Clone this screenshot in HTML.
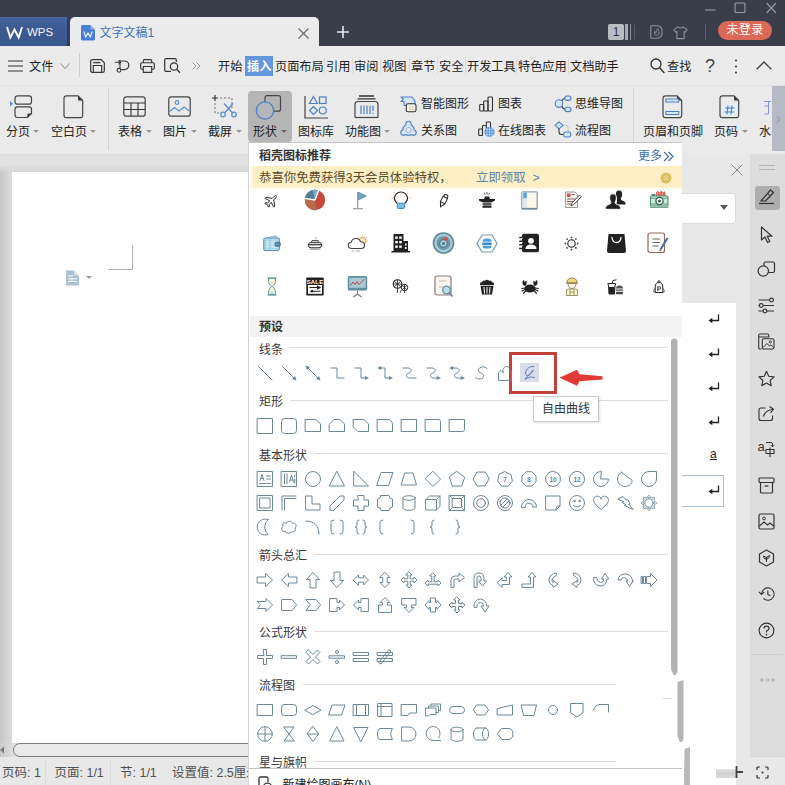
<!DOCTYPE html>
<html lang="zh-CN"><head><meta charset="utf-8"><title>WPS 文字文稿1</title>
<style>
*{box-sizing:border-box;margin:0;padding:0}
html,body{width:785px;height:785px;overflow:hidden;background:#dcdcdc;font-family:"Liberation Sans","Noto Sans CJK SC",sans-serif;font-size:13px;color:#222}
.abs{position:absolute}
svg{overflow:visible}
#root{position:relative;width:785px;height:785px;overflow:hidden;background:#dadada}
#titlebar{left:0;top:0;width:785px;height:46px;background:#3a3e4b}
#wpstab{left:0;top:17px;width:69px;height:29px;background:linear-gradient(180deg,#4566a0,#3c5a91 40%,#3b588e);border-right:2px solid #2f3b60;border-radius:0 0 4px 0;color:#fff}
#doctab{left:70px;top:17px;width:249px;height:31px;background:#ebebeb;border-radius:5px 5px 0 0}
#menubar{left:0;top:46px;width:785px;height:39px;background:#ebebeb}
#ribbon{left:0;top:85px;width:785px;height:69px;background:#eaeaea;border-top:1px solid #e0e0e0}
#work{left:0;top:154px;width:785px;height:631px;background:linear-gradient(180deg,#dddddd 0,#e3e3e3 3px,#e2e2e2 10px,#d6d6d6 18px,#d6d6d6 100%)}
#leftgrad{left:0;top:166px;width:12px;height:591px;background:linear-gradient(90deg,#c6c6c6,#dcdcdc);-webkit-mask-image:linear-gradient(180deg,transparent 0,#000 8px)}
#page{left:12px;top:172px;width:670px;height:571px;background:#fff}
#status{left:0;top:757px;width:785px;height:28px;background:#e8e8e8}
#panel{left:248px;top:142px;width:434px;height:643px;background:#fff;border-left:1px solid #d4d4d4;border-top:1px solid #c4c4c4}
#taskpane{left:682px;top:154px;width:67.500px;height:601.500px;background:#e8e8e8}
#side{left:749.500px;top:154px;width:35.500px;height:601.500px;background:#dddddd}
.t{position:absolute;white-space:nowrap;line-height:1}
.m{font-size:12.200px;color:#1f1f1f;top:60.500px}
.rl{font-size:12px;color:#222;top:126px}
.rs{font-size:12px;color:#222}
.sec{font-size:12px;color:#333;left:10px}
.hl{position:absolute;height:1px;background:#dcdcdc}
.st{font-size:12.500px;color:#505050;top:767px}
.tri{position:absolute;width:0;height:0;border-left:3px solid transparent;border-right:3px solid transparent;border-top:3.500px solid #9a9a9a;margin-top:-.5px}
</style></head><body>
<div id="root">
<!-- ======= title bar ======= -->
<div id="titlebar" class="abs"></div>
<div id="wpstab" class="abs">
  <svg class="abs" style="left:6px;top:9px" width="17" height="13" viewBox="0 0 17 13"><path d="M1 1 L4.3 11.5 L8.5 3.5 L12.7 11.5 L16 1" fill="none" stroke="#fff" stroke-width="1.9" stroke-linejoin="miter"/></svg>
  <span class="t" style="left:27px;top:10px;font-size:11.500px;color:#f4f6fa">WPS</span>
</div>
<div id="doctab" class="abs">
  <svg class="abs" style="left:11px;top:8px" width="14" height="15.500" viewBox="0 0 14 15.500"><path d="M1.500 0 H9.500 L14 4.500 V14 Q14 15.500 12.500 15.500 H1.500 Q0 15.500 0 14 V1.500 Q0 0 1.500 0Z" fill="#4a80d4"/><path d="M9.500 0 L14 4.500 H10.500 Q9.500 4.500 9.500 3.500Z" fill="#8fb4ec"/><path d="M2.800 6.500 L4.800 12 L7 8 L9.200 12 L11.200 6.500" fill="none" stroke="#eef4ff" stroke-width="1.100"/></svg>
  <span class="t" style="left:29.500px;top:9.500px;font-size:12px;color:#3c74b9">文字文稿1</span>
  <svg class="abs" style="left:228px;top:10.500px" width="11" height="11" viewBox="0 0 11 11"><path d="M0.5 .5 L10.5 10.5 M10.5 .5 L.5 10.5" stroke="#666" stroke-width="1.1"/></svg>
</div>
<svg class="abs" style="left:336px;top:25px" width="14" height="14" viewBox="0 0 14 14"><path d="M7 1 V13 M1 7 H13" stroke="#e8e8e8" stroke-width="1.6"/></svg>
<!-- window controls -->
<svg class="abs" style="left:700px;top:0" width="85" height="16" viewBox="0 0 85 16"><path d="M5 10 H15.500" stroke="#9a9ca5" stroke-width="1.100"/><rect x="35" y="3" width="10" height="9.500" rx="1" fill="none" stroke="#9a9ca5" stroke-width="1.100"/><path d="M66.500 3 L76 13 M76 3 L66.500 13" stroke="#9a9ca5" stroke-width="1.100"/></svg>
<div class="abs" style="left:608px;top:24px;width:16px;height:16px;background:#b9bbc2;border-radius:2px;color:#33363f;font-size:12px;line-height:16px;text-align:center">1</div>
<div class="abs" style="left:625px;top:24px;width:3px;height:16px;background:#a5a8b0"></div>
<div class="abs" style="left:630px;top:24px;width:1px;height:16px;background:#8a8d96"></div><div class="abs" style="left:634px;top:25px;width:1px;height:14px;background:#565a66"></div>
<svg class="abs" style="left:650px;top:25px" width="13" height="14" viewBox="0 0 13 14"><path d="M1.500 .8 H7 Q12.200 .8 12.200 7 Q12.200 13.200 7 13.200 H1.500 Q.8 13.200 .8 12.500 V1.500 Q.8 .8 1.500 .8Z" fill="none" stroke="#8f939d" stroke-width="1.100"/><path d="M6.500 11 Q3.500 9.500 4.500 6.500 Q5.500 7 5.800 8 Q6 5 8 3.500 Q8 5.500 9 6.500 Q10 9.500 6.500 11Z" fill="none" stroke="#8f939d" stroke-width=".9"/></svg>
<svg class="abs" style="left:673px;top:25.500px" width="15" height="13.500" viewBox="0 0 16 15"><path d="M5 1 Q8 3.5 11 1 L15.3 4 L13.3 7 L12 6.2 V14 H4 V6.2 L2.7 7 L.7 4 Z" fill="none" stroke="#8f939d" stroke-width="1.2" stroke-linejoin="round"/></svg>
<div class="abs" style="left:705px;top:24px;width:1px;height:16px;background:#5d616c"></div>
<div class="abs" style="left:718px;top:21px;width:54px;height:19px;border-radius:10px;background:#dc6858;color:#fff;font-size:12px;line-height:18px;text-align:center;letter-spacing:.3px">未登录</div>

<!-- ======= menu bar ======= -->
<div id="menubar" class="abs"></div>
<svg class="abs" style="left:8px;top:60px" width="15" height="12" viewBox="0 0 15 12"><path d="M0 1 H15 M0 6 H15 M0 11 H15" stroke="#333" stroke-width="1.2"/></svg>
<span class="t m" style="left:29px">文件</span>
<svg class="abs" style="left:60px;top:63px" width="10" height="7" viewBox="0 0 10 7"><path d="M.5 .5 L5 5.5 L9.500 .5" fill="none" stroke="#999" stroke-width="1.1"/></svg>
<div class="abs" style="left:79px;top:53px;width:1px;height:24px;background:#cfcfcf"></div>
<!-- quick icons -->
<svg class="abs" style="left:89.500px;top:58.500px" width="15" height="14" viewBox="0 0 16 15"><path d="M2.500 .7 H12 L15.300 4 V12.500 Q15.300 14.300 13.500 14.300 H2.500 Q.7 14.300 .7 12.500 V2.500 Q.7 .7 2.500 .7Z M3.500 14 V7 H12.500 V14 M3.500 3.800 H11" fill="none" stroke="#363636" stroke-width="1.250"/></svg>
<svg class="abs" style="left:114px;top:58px" width="16" height="16" viewBox="0 0 16 16"><path d="M.8 4.300 H6.500 M4.500 2.300 L6.700 4.300 L4.500 6.300" fill="none" stroke="#363636" stroke-width="1.100"/><path d="M6 2 V10.500" stroke="#363636" stroke-width="1.100"/><path d="M7 3 H10.500 A4.300 4.300 0 0 1 10.500 11.600 H7.200" fill="none" stroke="#363636" stroke-width="1.200"/><circle cx="5" cy="12.300" r="1.900" fill="#ebebeb" stroke="#363636" stroke-width="1.100"/></svg>
<svg class="abs" style="left:139.500px;top:58.500px" width="15" height="14" viewBox="0 0 16 15"><path d="M3.500 4 V2 Q3.500 .7 4.800 .7 H11.200 Q12.500 .7 12.500 2 V4 M3.500 11 H2 Q.7 11 .7 9.700 V5.300 Q.7 4 2 4 H14 Q15.300 4 15.300 5.300 V9.700 Q15.300 11 14 11 H12.500 M3.500 8 H12.500 V14.300 H3.500 Z" fill="none" stroke="#363636" stroke-width="1.250"/></svg>
<svg class="abs" style="left:164px;top:58px" width="17" height="16" viewBox="0 0 17 16"><path d="M7 13.300 H2 Q.7 13.300 .7 12 V2 Q.7 .7 2 .7 H11 Q12.300 .7 12.300 2 V4" fill="none" stroke="#333" stroke-width="1.200"/><circle cx="10" cy="8.500" r="3.700" fill="none" stroke="#333" stroke-width="1.200"/><path d="M12.700 11.200 L16 14.800" stroke="#333" stroke-width="1.300"/></svg>
<svg class="abs" style="left:192px;top:62px" width="9" height="8" viewBox="0 0 9 8"><path d="M.5 .5 L4 4 L.5 7.500 M4.500 .5 L8 4 L4.500 7.500" fill="none" stroke="#999" stroke-width="1"/></svg>
<!-- tabs -->
<span class="t m" style="left:218px">开始</span>
<div class="abs" style="left:245px;top:55.500px;width:28px;height:20.500px;background:#6496de"></div>
<span class="t m" style="left:247px;color:#fff;font-weight:bold">插入</span>
<span class="t m" style="left:275px">页面布局</span>
<span class="t m" style="left:326px">引用</span>
<span class="t m" style="left:354px">审阅</span>
<span class="t m" style="left:382px">视图</span>
<span class="t m" style="left:411px">章节</span>
<span class="t m" style="left:439px">安全</span>
<span class="t m" style="left:467px">开发工具</span>
<span class="t m" style="left:518px">特色应用</span>
<span class="t m" style="left:570px">文档助手</span>
<div class="abs" style="left:324px;top:58px;width:1px;height:16px;background:#dadada"></div>
<div class="abs" style="left:352px;top:58px;width:1px;height:16px;background:#dadada"></div>
<div class="abs" style="left:380px;top:58px;width:1px;height:16px;background:#dadada"></div>
<div class="abs" style="left:409px;top:58px;width:1px;height:16px;background:#dadada"></div>
<div class="abs" style="left:437px;top:58px;width:1px;height:16px;background:#dadada"></div>
<div class="abs" style="left:465px;top:58px;width:1px;height:16px;background:#dadada"></div>
<div class="abs" style="left:516px;top:58px;width:1px;height:16px;background:#dadada"></div>
<div class="abs" style="left:568px;top:58px;width:1px;height:16px;background:#dadada"></div>
<svg class="abs" style="left:650px;top:58px" width="15" height="16" viewBox="0 0 15 16"><circle cx="6" cy="6" r="5" fill="none" stroke="#333" stroke-width="1.300"/><path d="M9.700 9.700 L14.300 15" stroke="#333" stroke-width="1.400"/></svg>
<span class="t m" style="left:667px">查找</span>
<span class="t" style="left:705px;top:57px;font-size:18px;color:#444">?</span>
<svg class="abs" style="left:734px;top:59px" width="4" height="15" viewBox="0 0 4 15"><circle cx="2" cy="1.500" r="1.100" fill="#444"/><circle cx="2" cy="7.500" r="1.100" fill="#444"/><circle cx="2" cy="13.500" r="1.100" fill="#444"/></svg>
<svg class="abs" style="left:756px;top:61px" width="16" height="9" viewBox="0 0 16 9"><path d="M.7 8.300 L8 1 L15.300 8.300" fill="none" stroke="#444" stroke-width="1.300"/></svg>

<!-- ======= ribbon ======= -->
<div id="ribbon" class="abs"></div>
<!-- highlighted 形状 button -->
<div class="abs" style="left:248px;top:91px;width:44px;height:51px;background:#b5b5b5;border-radius:4px"></div>
<!-- 分页 -->
<svg class="abs" style="left:9px;top:95px" width="24" height="24" viewBox="0 0 24 24"><path d="M1 6 L4 8.800 L1 11.600Z" fill="#5b8fd8"/><rect x="6" y=".8" width="16.500" height="8.400" rx="2.500" fill="none" stroke="#454545" stroke-width="1.200"/><path d="M8.500 11.800 H20 Q22.500 11.800 22.500 14.300 V18.500 L18.500 22.500 H8.500 Q6 22.500 6 20 V14.300 Q6 11.800 8.500 11.800Z" fill="none" stroke="#454545" stroke-width="1.200"/><path d="M22.500 18.500 L18.500 22.500 V19.500 Q18.500 18.500 19.500 18.500Z" fill="#333"/></svg>
<span class="t rl" style="left:6px">分页</span><i class="tri" style="left:33px;top:130px"></i>
<!-- 空白页 -->
<svg class="abs" style="left:63px;top:95px" width="21" height="24" viewBox="0 0 21 24"><path d="M3.500 .8 H15 L19.700 5.500 V20.200 Q19.700 22.700 17.200 22.700 H3.500 Q1 22.700 1 20.200 V3.300 Q1 .8 3.500 .8Z" fill="none" stroke="#454545" stroke-width="1.200"/><path d="M15 .8 L19.700 5.500 H16 Q15 5.500 15 4.500Z" fill="#333"/></svg>
<span class="t rl" style="left:51px">空白页</span><i class="tri" style="left:90px;top:130px"></i>
<div class="abs" style="left:108px;top:88px;width:1px;height:62px;background:#d4d4d4"></div>
<!-- 表格 -->
<svg class="abs" style="left:123px;top:96px" width="23" height="21" viewBox="0 0 23 21"><rect x=".8" y=".8" width="21.400" height="19.400" rx="2.500" fill="none" stroke="#454545" stroke-width="1.200"/><path d="M.8 7 H22.200 M.8 13.500 H22.200 M8 7 V20 M15 7 V20" stroke="#333" stroke-width="1.100"/></svg>
<span class="t rl" style="left:118px">表格</span><i class="tri" style="left:146px;top:130px"></i>
<!-- 图片 -->
<svg class="abs" style="left:168px;top:96px" width="23" height="21" viewBox="0 0 23 21"><rect x=".8" y=".8" width="21.400" height="19.400" rx="2.500" fill="none" stroke="#454545" stroke-width="1.200"/><circle cx="9" cy="6.500" r="1.800" fill="none" stroke="#5b8fd8" stroke-width="1.200"/><path d="M1.500 15.500 L6.500 11.500 L11 15 L16 11 L21.500 15" fill="none" stroke="#5b8fd8" stroke-width="1.200"/></svg>
<span class="t rl" style="left:163px">图片</span><i class="tri" style="left:191px;top:130px"></i>
<!-- 截屏 -->
<svg class="abs" style="left:211px;top:94px" width="26" height="25" viewBox="0 0 26 25"><path d="M1 4 H7 M4 1 V7" stroke="#333" stroke-width="1.200"/><path d="M9 4 H21 V14 M4 9 V19 H8" fill="none" stroke="#777" stroke-width="1" stroke-dasharray="2.200 1.800"/><path d="M13 9.500 L21.500 19 M22 9.500 L13.500 19" stroke="#5b8fd8" stroke-width="1.300"/><circle cx="12" cy="20.500" r="2.300" fill="none" stroke="#5b8fd8" stroke-width="1.300"/><circle cx="23" cy="20.500" r="2.300" fill="none" stroke="#5b8fd8" stroke-width="1.300"/></svg>
<span class="t rl" style="left:208px">截屏</span><i class="tri" style="left:236px;top:130px"></i>
<!-- 形状 -->
<svg class="abs" style="left:255px;top:94px" width="27" height="27" viewBox="0 0 27 27"><rect x="10" y="1.700" width="15.500" height="15.500" rx="2" fill="none" stroke="#454545" stroke-width="1.200"/><circle cx="10" cy="16.500" r="8.700" fill="#b3b7bd" stroke="#4d7fc4" stroke-width="1.300"/></svg>
<span class="t rl" style="left:253px">形状</span><i class="tri" style="left:281px;top:130px;border-top-color:#666"></i>
<!-- 图标库 -->
<svg class="abs" style="left:304px;top:94px" width="25" height="26" viewBox="0 0 25 26"><path d="M1 2 V24 H24" fill="none" stroke="#454545" stroke-width="1.200"/><path d="M9.500 2.500 L13.500 9.500 H5.500Z" fill="none" stroke="#4d7fc4" stroke-width="1.200"/><rect x="15.500" y="3" width="6.500" height="6.500" fill="none" stroke="#4d7fc4" stroke-width="1.200"/><path d="M9.500 12.500 L13.500 16.500 L9.500 20.500 L5.500 16.500Z" fill="none" stroke="#4d7fc4" stroke-width="1.200"/><circle cx="18.800" cy="16.500" r="3.500" fill="none" stroke="#4d7fc4" stroke-width="1.200"/></svg>
<span class="t rl" style="left:298px">图标库</span>
<!-- 功能图 -->
<svg class="abs" style="left:354px;top:95px" width="25" height="24" viewBox="0 0 25 24"><path d="M5 1 H20 M3.500 3.800 H21.500" stroke="#333" stroke-width="1.300"/><path d="M1 22.500 V9.500 Q1 6.500 4 6.500 H21 Q24 6.500 24 9.500 V22.500" fill="none" stroke="#454545" stroke-width="1.200"/><path d="M1 22.500 H24" stroke="#454545" stroke-width="1.200"/><path d="M7 10.500 V19 M10 10.500 V19 M13 10.500 V19 M16 10.500 V19" stroke="#4d7fc4" stroke-width="1.200"/><path d="M19 10.500 V16 M19 17.800 V19" stroke="#4d7fc4" stroke-width="1.200"/></svg>
<span class="t rl" style="left:345px">功能图</span><i class="tri" style="left:384px;top:130px"></i>
<!-- small items col 1 -->
<svg class="abs" style="left:400px;top:95.500px" width="17" height="17" viewBox="0 0 17 17"><path d="M1 1 H12 L15 5 V9.500 H4 V5.500 L1 5.500 L3.300 3.200Z" fill="#d3e4f6" stroke="#4d7fc4" stroke-width="1.100" stroke-linejoin="round"/><rect x="6.300" y="7.800" width="9.700" height="8" rx="1.800" fill="#f4f4f4" stroke="#333" stroke-width="1.100"/><path d="M9 11 H10.500 M11.800 11 H13.500 M9 13.300 H10.500 M11.800 13.300 H13.500" stroke="#d9a050" stroke-width=".9"/></svg>
<span class="t rs" style="left:421px;top:98px">智能图形</span>
<svg class="abs" style="left:400px;top:121px" width="17" height="16" viewBox="0 0 17 16"><path d="M5.800 3.800 A2.800 2.800 0 1 1 11.200 3.800 A6.500 6.500 0 0 1 14.200 8.800 A2.800 2.800 0 1 1 11.500 13.500 A6.500 6.500 0 0 1 5.500 13.500 A2.800 2.800 0 1 1 2.800 8.800 A6.500 6.500 0 0 1 5.800 3.800Z" fill="#d8e6f5" stroke="#5186c6" stroke-width="1.200" stroke-linejoin="round"/><circle cx="8.500" cy="9" r="2.600" fill="#e6ecf3" stroke="#8fb0da" stroke-width=".9"/></svg>
<span class="t rs" style="left:421px;top:125px">关系图</span>
<!-- col 2 -->
<svg class="abs" style="left:478.500px;top:95.500px" width="15" height="16" viewBox="0 0 15 16"><rect x=".7" y="8.500" width="4" height="6.500" rx=".8" fill="none" stroke="#333" stroke-width="1.100"/><rect x="4.700" y="5" width="4.300" height="10" rx=".8" fill="none" stroke="#333" stroke-width="1.100"/><rect x="9" y="1" width="4.500" height="14" rx=".8" fill="none" stroke="#333" stroke-width="1.100"/></svg>
<span class="t rs" style="left:498px;top:98px">图表</span>
<svg class="abs" style="left:478px;top:121px" width="17" height="17" viewBox="0 0 17 17"><rect x=".7" y="8" width="3.800" height="6.500" rx=".8" fill="none" stroke="#333" stroke-width="1.100"/><path d="M4.500 14.500 V5.300 Q4.500 4.500 5.300 4.500 H8.300 M8.300 14 V1.800 Q8.300 1 9.100 1 H11.700 Q12.500 1 12.500 1.800 V6" fill="none" stroke="#333" stroke-width="1.100"/><circle cx="11.500" cy="11" r="5" fill="#3f86d8"/><path d="M6.500 11 H16.500 M11.500 6 V16 M7.500 8.300 H15.500 M7.500 13.700 H15.500 M9 6.800 V15.200 M14 6.800 V15.200" stroke="#cfe2f8" stroke-width=".7" fill="none"/></svg>
<span class="t rs" style="left:498px;top:125px">在线图表</span>
<!-- col 3 -->
<svg class="abs" style="left:554px;top:95px" width="18" height="18" viewBox="0 0 18 18"><path d="M7.500 6.500 Q9 3.200 11 3.200 M7.500 10.500 Q9 14.300 11 14.300" stroke="#333" stroke-width="1.100" fill="none"/><circle cx="5" cy="8.600" r="3.800" fill="#d3e4f6" stroke="#4d7fc4" stroke-width="1.100"/><rect x="10.800" y="1" width="6.200" height="4.400" rx="2.200" fill="#d3e4f6" stroke="#4d7fc4" stroke-width="1.100"/><rect x="10.800" y="12.200" width="6.200" height="4.400" rx="2.200" fill="#d3e4f6" stroke="#4d7fc4" stroke-width="1.100"/></svg>
<span class="t rs" style="left:575px;top:98px">思维导图</span>
<svg class="abs" style="left:554px;top:121px" width="18" height="17" viewBox="0 0 18 17"><path d="M5 .8 L9 4.300 L5 7.800 L1 4.300Z" fill="#d3e4f6" stroke="#4d7fc4" stroke-width="1.100" stroke-linejoin="round"/><path d="M5 7.800 V11 Q5 13.500 7.500 13.500 H9.500" fill="none" stroke="#333" stroke-width="1.100"/><path d="M9.500 4.300 H12 Q14 4.300 14 6.300 V10" fill="none" stroke="#999" stroke-width=".9" stroke-dasharray="1.300 1.300"/><rect x="9.700" y="11" width="7" height="5" rx="1.800" fill="#d3e4f6" stroke="#4d7fc4" stroke-width="1.100"/></svg>
<span class="t rs" style="left:575px;top:125px">流程图</span>
<div class="abs" style="left:633px;top:88px;width:1px;height:62px;background:#d4d4d4"></div>
<!-- 页眉和页脚 -->
<svg class="abs" style="left:662px;top:95px" width="21" height="24" viewBox="0 0 21 24"><path d="M3.500 .8 H15 L19.700 5.500 V20.200 Q19.700 22.700 17.200 22.700 H3.500 Q1 22.700 1 20.200 V3.300 Q1 .8 3.500 .8Z" fill="none" stroke="#454545" stroke-width="1.200"/><path d="M15 .8 L19.700 5.500 H16 Q15 5.500 15 4.500Z" fill="#333"/><rect x="3.800" y="4" width="13" height="3" fill="#dbe6f6" stroke="#4d7fc4" stroke-width="1"/><rect x="3.800" y="16.500" width="13" height="3" fill="#dbe6f6" stroke="#4d7fc4" stroke-width="1"/></svg>
<span class="t rl" style="left:643px">页眉和页脚</span>
<!-- 页码 -->
<svg class="abs" style="left:718.500px;top:95px" width="21" height="24" viewBox="0 0 21 24"><path d="M3.500 .8 H15 L19.700 5.500 V20.200 Q19.700 22.700 17.200 22.700 H3.500 Q1 22.700 1 20.200 V3.300 Q1 .8 3.500 .8Z" fill="none" stroke="#454545" stroke-width="1.200"/><path d="M15 .8 L19.700 5.500 H16 Q15 5.500 15 4.500Z" fill="#333"/><rect x="3" y="9" width="15" height="11.500" fill="#e3eefb"/><path d="M6 13 H15.500 M5.500 17 H15 M9 10.500 L8 19.500 M13 10.500 L12 19.500" stroke="#4d7fc4" stroke-width="1.100"/></svg>
<span class="t rl" style="left:714px">页码</span><i class="tri" style="left:742px;top:130px"></i>
<!-- 水印 (cut) -->
<svg class="abs" style="left:763px;top:100px" width="9" height="16" viewBox="0 0 9 16"><path d="M1 1.500 H8 M5.500 1.500 V6 H1.500 M5.500 6 V14 H1.500" fill="none" stroke="#8196d6" stroke-width="1"/></svg>
<span class="t rl" style="left:759px">水印</span>
<!-- ribbon scroller -->
<div class="abs" style="left:772px;top:86px;width:13px;height:65px;background:#b6bac5"></div>
<svg class="abs" style="left:776px;top:115.500px" width="5" height="7" viewBox="0 0 5 7"><path d="M.8 .5 L4 3.500 L.8 6.500" fill="none" stroke="#8d919c" stroke-width="1"/></svg>


<!-- ======= work area ======= -->
<div id="work" class="abs"></div>
<div id="leftgrad" class="abs"></div>
<div id="page" class="abs"></div>
<!-- page corner mark -->
<div class="abs" style="left:132px;top:245px;width:1px;height:25px;background:#b0b0b0"></div>
<div class="abs" style="left:108px;top:269px;width:25px;height:1px;background:#b0b0b0"></div>
<svg class="abs" style="left:65px;top:270px" width="15" height="16" viewBox="0 0 15 16"><path d="M1 .5 H9 L14 5.500 V15.500 H1Z" fill="#a9c1d3"/><path d="M9 .5 L14 5.500 H9Z" fill="#d5e2ec"/><path d="M3 6 H8 M3 8.800 H12 M3 11.500 H12 M7 8.800 V11.500" stroke="#fff" stroke-width="1"/></svg>
<i class="tri" style="left:86px;top:276px;border-top-color:#999"></i>
<!-- horizontal scrollbar -->
<div class="abs" style="left:0;top:743px;width:250px;height:14px;background:linear-gradient(90deg,#cbcbcb 0,#dcdcdc 12px)"></div>
<svg class="abs" style="left:0;top:746px" width="4" height="8" viewBox="0 0 4 8"><path d="M4 .5 V7.500 L0 4Z" fill="#7a7a7a"/></svg>
<div class="abs" style="left:13px;top:743px;width:260px;height:14px;background:#e9e9e9;border:1px solid #7c7c7c;border-radius:7px"></div>

<div id="status" class="abs"></div>
<span class="t st" style="left:2px">页码: 1</span>
<div class="abs" style="left:45px;top:760px;width:1px;height:25px;background:#dadada"></div>
<span class="t st" style="left:54.500px">页面: 1/1</span>
<div class="abs" style="left:110px;top:760px;width:1px;height:25px;background:#dadada"></div>
<span class="t st" style="left:120px">节: 1/1</span>
<span class="t st" style="left:172px">设置值: 2.5厘米</span>


<svg class="abs" style="left:756px;top:766px" width="13" height="13" viewBox="0 0 13 13"><path d="M1 4 V2 Q1 1 2 1 H4 M9 1 H11 Q12 1 12 2 V4 M12 9 V11 Q12 12 11 12 H9 M4 12 H2 Q1 12 1 11 V9" fill="none" stroke="#333" stroke-width="1.200"/><circle cx="6.500" cy="6.500" r="1" fill="#333"/></svg>

<div id="taskpane" class="abs"></div>
<div id="side" class="abs"></div>
<!-- task pane -->
<svg class="abs" style="left:731px;top:164px" width="12" height="12" viewBox="0 0 12 12"><path d="M.5 .5 L11.500 11.500 M11.500 .5 L.5 11.500" stroke="#888" stroke-width="1"/></svg>
<div class="abs" style="left:682px;top:193px;width:54px;height:31px;background:#fff;border:1px solid #dcdcdc;border-left:none;border-radius:0 3px 3px 0"></div>
<i class="tri" style="left:720px;top:205px;border-left-width:4px;border-right-width:4px;border-top:5px solid #555"></i>
<div class="abs" style="left:682px;top:303px;width:54px;height:482px;background:#fff"></div>
<div class="abs" style="left:736px;top:755px;width:14px;height:30px;background:#e8e8e8"></div>
<div class="abs" style="left:682px;top:475px;width:42px;height:32px;border:1px solid #a9c3d6;border-left:none"></div>
<!-- paragraph marks -->
<svg class="abs" style="left:708px;top:313.5px" width="12" height="11" viewBox="0 0 12 11"><path d="M10.500 .5 V6.500 H2.500" fill="none" stroke="#222" stroke-width="1.300"/><path d="M.5 6.500 L4.300 3.700 V9.300Z" fill="#222"/></svg>
<svg class="abs" style="left:708px;top:347.5px" width="12" height="11" viewBox="0 0 12 11"><path d="M10.500 .5 V6.500 H2.500" fill="none" stroke="#222" stroke-width="1.300"/><path d="M.5 6.500 L4.300 3.700 V9.300Z" fill="#222"/></svg>
<svg class="abs" style="left:708px;top:381.5px" width="12" height="11" viewBox="0 0 12 11"><path d="M10.500 .5 V6.500 H2.500" fill="none" stroke="#222" stroke-width="1.300"/><path d="M.5 6.500 L4.300 3.700 V9.300Z" fill="#222"/></svg>
<svg class="abs" style="left:708px;top:415.5px" width="12" height="11" viewBox="0 0 12 11"><path d="M10.500 .5 V6.500 H2.500" fill="none" stroke="#222" stroke-width="1.300"/><path d="M.5 6.500 L4.300 3.700 V9.300Z" fill="#222"/></svg>
<span class="t" style="left:710px;top:448px;font-size:12px;color:#222;text-decoration:underline">a</span>
<svg class="abs" style="left:708px;top:484.5px" width="12" height="11" viewBox="0 0 12 11"><path d="M10.500 .5 V6.500 H2.500" fill="none" stroke="#222" stroke-width="1.300"/><path d="M.5 6.500 L4.300 3.700 V9.300Z" fill="#222"/></svg>
<!-- sidebar -->
<div class="abs" style="left:759px;top:164.500px;width:16px;height:1px;background:#b4b4b4"></div>
<div class="abs" style="left:759px;top:168.500px;width:16px;height:1px;background:#b4b4b4"></div>
<div class="abs" style="left:755px;top:186px;width:24.500px;height:24px;background:#aeaeae;border-radius:3px"></div>

<svg class="abs" style="left:757px;top:187px" width="20" height="19" viewBox="0 0 20 19"><path d="M2 16.500 H17" stroke="#333" stroke-width="1.200"/><path d="M4 14 L13.500 3 L16.500 5.500 L8.500 14Z" fill="none" stroke="#333" stroke-width="1.200" stroke-linejoin="round"/><path d="M10.500 6.500 L13.500 9" stroke="#333" stroke-width="1"/></svg>
<svg class="abs" style="left:760px;top:226px" width="14" height="18" viewBox="0 0 14 18"><path d="M1.500 1 V14 L5 11 L7.500 16.500 L9.800 15.500 L7.300 10.200 H12Z" fill="none" stroke="#333" stroke-width="1.200" stroke-linejoin="round"/></svg>
<svg class="abs" style="left:757px;top:261px" width="19" height="18" viewBox="0 0 19 18"><rect x="7" y="1" width="10.500" height="10.500" rx="1.500" fill="none" stroke="#333" stroke-width="1.200"/><circle cx="6.300" cy="10" r="5.200" fill="#dedede" stroke="#333" stroke-width="1.200"/></svg>
<svg class="abs" style="left:758px;top:297px" width="17" height="17" viewBox="0 0 17 17"><path d="M.5 3 H16 M.5 8.500 H16 M.5 14 H16" stroke="#333" stroke-width="1.100"/><circle cx="13.500" cy="3" r="1.900" fill="#dddddd" stroke="#333" stroke-width="1.100"/><circle cx="3.200" cy="8.500" r="1.900" fill="#dddddd" stroke="#333" stroke-width="1.100"/><circle cx="7" cy="14" r="1.900" fill="#dddddd" stroke="#333" stroke-width="1.100"/></svg>
<svg class="abs" style="left:758px;top:333px" width="17" height="17" viewBox="0 0 17 17"><path d="M3.500 16 H2 Q.7 16 .7 14.700 V2.300 Q.7 1 2 1 H9.500 Q10.800 1 10.800 2.300 V4.500 M.7 4 H10.800" fill="none" stroke="#333" stroke-width="1.100"/><rect x="4.300" y="5.800" width="11.700" height="10.200" rx="1.500" fill="none" stroke="#333" stroke-width="1.100"/><circle cx="12.300" cy="9" r="1.100" fill="none" stroke="#333" stroke-width=".9"/><path d="M5 14.500 L9 10.500 L11.500 13 L13 11.800 L15.500 14.300" fill="none" stroke="#333" stroke-width="1"/></svg>
<svg class="abs" style="left:758px;top:369.500px" width="17" height="17" viewBox="0 0 19 19"><path d="M9.500 1.500 L12 7 L18 7.700 L13.500 11.700 L14.800 17.500 L9.500 14.500 L4.200 17.500 L5.500 11.700 L1 7.700 L7 7Z" fill="none" stroke="#333" stroke-width="1.300" stroke-linejoin="round"/></svg>
<svg class="abs" style="left:758px;top:405px" width="17" height="17" viewBox="0 0 17 17"><path d="M7.500 3 H3 Q1 3 1 5 V13.500 Q1 15.500 3 15.500 H12.500 Q14.500 15.500 14.500 13.500 V10.500" fill="none" stroke="#333" stroke-width="1.100"/><path d="M5.500 11.500 Q7 5.500 15 4.300 M11.500 1.500 L15.500 4.200 L12.500 7.800" fill="none" stroke="#333" stroke-width="1.100" stroke-linejoin="round"/></svg>
<svg class="abs" style="left:756px;top:439px" width="21" height="20" viewBox="0 0 21 20"><text x="1.500" y="12" font-family="Liberation Sans,sans-serif" font-size="13" fill="#333">a</text><path d="M10 3.500 H15 Q16.500 3.500 16.500 5 V7.500 M14.500 5.800 L16.500 7.800 L18.500 5.800" fill="none" stroke="#333" stroke-width="1"/><path d="M10 10.500 H18 V14.500 H10Z M14 8.500 V18" fill="none" stroke="#333" stroke-width="1.100"/></svg>
<svg class="abs" style="left:758px;top:477px" width="17" height="17" viewBox="0 0 17 17"><rect x="1" y="1" width="15" height="4.500" rx="1" fill="none" stroke="#333" stroke-width="1.200"/><path d="M2.500 5.500 V15 Q2.500 16 3.500 16 H13.500 Q14.500 16 14.500 15 V5.500" fill="none" stroke="#333" stroke-width="1.200"/><path d="M6.500 9 H10.500" stroke="#333" stroke-width="1.200"/></svg>
<svg class="abs" style="left:758px;top:513px" width="17" height="17" viewBox="0 0 17 17"><rect x="1" y="1" width="15" height="15" rx="1.500" fill="none" stroke="#333" stroke-width="1.200"/><circle cx="6" cy="5.500" r="1.400" fill="none" stroke="#333" stroke-width="1"/><path d="M1.500 13 L6 9 L9.500 12 L12 10 L15.500 13" fill="none" stroke="#333" stroke-width="1.100"/></svg>
<svg class="abs" style="left:758px;top:549px" width="17" height="18" viewBox="0 0 17 18"><path d="M8.500 1 L15.500 5 V13 L8.500 17 L1.500 13 V5Z" fill="none" stroke="#333" stroke-width="1.200" stroke-linejoin="round"/><path d="M8.500 13 V8 M8.500 10.500 Q5.500 10 5.500 7 Q8.500 7.500 8.500 10.500 Q11.500 9.500 11.500 6.500 Q8.500 7 8.500 10" fill="none" stroke="#333" stroke-width="1"/></svg>
<svg class="abs" style="left:757.500px;top:586px" width="17" height="16" viewBox="0 0 19 18"><path d="M4 9 A7 7 0 1 1 6 14" fill="none" stroke="#333" stroke-width="1.200"/><path d="M1 6.500 L4 9.500 L7 6.500" fill="none" stroke="#333" stroke-width="1.200"/><path d="M11 5 V9.500 L14 11" fill="none" stroke="#333" stroke-width="1.200"/></svg>
<svg class="abs" style="left:757.500px;top:621.500px" width="17" height="17" viewBox="0 0 18 18"><circle cx="9" cy="9" r="7.800" fill="none" stroke="#333" stroke-width="1.200"/><path d="M6.300 7 Q6.300 4.300 9 4.300 Q11.700 4.300 11.700 6.800 Q11.700 8.300 9 9.500 V11" fill="none" stroke="#333" stroke-width="1.200"/><circle cx="9" cy="13.300" r=".9" fill="#333"/></svg>
<div class="abs" style="left:752px;top:654px;width:31px;height:1px;background:#cfcfcf"></div>
<svg class="abs" style="left:760px;top:678px" width="15" height="4" viewBox="0 0 15 4"><circle cx="2" cy="2" r="1.300" fill="#e6e6e6" stroke="#8c8c8c" stroke-width=".7"/><circle cx="7.500" cy="2" r="1.300" fill="#e6e6e6" stroke="#8c8c8c" stroke-width=".7"/><circle cx="13" cy="2" r="1.300" fill="#e6e6e6" stroke="#8c8c8c" stroke-width=".7"/></svg>

<div class="abs" style="left:716px;top:769px;width:21px;height:8.500px;background:linear-gradient(180deg,#e3e3e3,#cfcfcf 50%,#dcdcdc)"></div>
<svg class="abs" style="left:733px;top:765px" width="11" height="14" viewBox="0 0 11 14"><path d="M3.500 1 V13 M2.500 7 H10" stroke="#444" stroke-width="1.800"/></svg>

<!-- ======= dropdown panel ======= -->
<div id="panel" class="abs"></div>

<span class="t" style="left:259px;top:149.500px;font-size:12px;font-weight:bold;color:#333">稻壳图标推荐</span>
<span class="t" style="left:638px;top:149.500px;font-size:12px;color:#3b6ea8">更多</span>
<svg class="abs" style="left:663px;top:150.500px" width="11" height="11" viewBox="0 0 11 11"><path d="M1 1 L5.500 5.500 L1 10 M5.500 1 L10 5.500 L5.500 10" fill="none" stroke="#3b6ea8" stroke-width="1.100"/></svg>
<div class="abs" style="left:249px;top:165.500px;width:433px;height:21.500px;background:linear-gradient(90deg,#fff 0,#fdefc3 6px)"></div>
<div class="abs" style="left:249px;top:187px;width:433px;height:3px;background:linear-gradient(180deg,#fdf3d4,#fff)"></div>
<span class="t" style="left:259px;top:172px;font-size:12.400px;color:#5b4a2b">恭喜你免费获得3天会员体验特权，</span>
<span class="t" style="left:476px;top:172px;font-size:12.400px;color:#5d82a8">立即领取&nbsp; &gt;</span>
<svg class="abs" style="left:660px;top:172px" width="12" height="12" viewBox="0 0 12 12"><circle cx="6" cy="6" r="5.500" fill="#dcbf62"/><path d="M4 4 L8 8 M8 4 L4 8" stroke="#ecd78f" stroke-width="1.200"/></svg>
<svg class="abs" style="left:264px;top:193px" width="15" height="15" viewBox="0 0 15 15"><g transform="translate(1.3 1.3) scale(.83) rotate(45 7.500 7.500)"><path d="M7.500 -.5 Q8.800 -.5 8.800 1.500 V5.200 L15 9.500 V11.300 L8.800 9.300 V12.800 L10.800 14.300 V15.600 L7.500 14.700 L4.200 15.600 V14.300 L6.200 12.800 V9.300 L0 11.300 V9.500 L6.200 5.200 V1.500 Q6.200 -.5 7.500 -.5Z" fill="#fff" stroke="#222" stroke-width="1.100" stroke-linejoin="round"/></g></svg>
<svg class="abs" style="left:304px;top:189px" width="22" height="22" viewBox="0 0 22 22"><circle cx="11" cy="11" r="10.200" fill="#c24a3a"/><path d="M11 11 L1 9.500 A10.200 10.200 0 0 0 12.500 21.100Z" fill="#b8684c"/><path d="M11 11 L14.500 1.400 A10.200 10.200 0 0 0 .9 9.500Z" fill="#4d7f97"/><path d="M11 11 L8.500 1.200 A10.200 10.200 0 0 1 14.500 1.400Z" fill="#7fa9bd"/><path d="M11 11 L14.800 1 M11 11 L.5 9.300" stroke="#fff" stroke-width="1.300"/></svg>
<svg class="abs" style="left:352px;top:191px" width="15" height="19" viewBox="0 0 15 19"><path d="M5.700 1 V17.500" stroke="#9aa5a8" stroke-width="1.300"/><path d="M1 17.700 H11" stroke="#9aa5a8" stroke-width="1.300"/><path d="M6.300 1.200 L14.300 5 L6.300 9Z" fill="#6da7c0" stroke="#4f8aa5" stroke-width=".8"/></svg>
<svg class="abs" style="left:391px;top:191px" width="20" height="19" viewBox="0 0 20 19"><path d="M6.500 12.500 Q3.500 10.500 3.500 7.500 A6.500 6.500 0 0 1 16.500 7.500 Q16.500 10.500 13.500 12.500" fill="#fff" stroke="#222" stroke-width="1.100"/><rect x="6.300" y="12.300" width="7.400" height="5.200" rx="1" fill="#7dbfe0" stroke="#3d8fc0" stroke-width="1"/><path d="M10 .3 V1.800 M3.200 1.500 L4.300 2.800 M16.800 1.500 L15.700 2.800 M.5 7 H1.800 M18.200 7 H19.500" stroke="#e0a070" stroke-width="1"/></svg>
<svg class="abs" style="left:438px;top:193.5px" width="11" height="14" viewBox="0 0 11 14"><g transform="rotate(27 5.500 7)"><path d="M3.500 1.500 Q3.500 0 5.500 0 Q7.500 0 7.500 1.500 V3 H3.500Z M3 3 H8 V9 L5.500 13.500 L3 9Z M3 9 H8" fill="#fff" stroke="#222" stroke-width="1"/></g></svg>
<svg class="abs" style="left:478px;top:191px" width="18" height="17" viewBox="0 0 18 17"><path d="M6.700 5.500 H11.300 L11.800 8 H17 V9.500 Q14 11.500 12.500 11.500 H5.500 Q4 11.500 1 9.500 V8 H6.200Z" fill="#222"/><rect x="4.500" y="12.300" width="9" height="1.500" fill="#222"/><rect x="4.500" y="14.500" width="9" height="2.300" rx=".6" fill="#222"/><path d="M9 1 V3.500 M6.300 1.800 L7.300 3.800 M11.700 1.800 L10.700 3.800" stroke="#555" stroke-width=".9"/></svg>
<svg class="abs" style="left:521px;top:191px" width="17" height="19" viewBox="0 0 17 19"><rect x=".8" y=".8" width="15.400" height="17.400" rx="1" fill="#fbf8e6" stroke="#8aa2b4" stroke-width="1.300"/><rect x="1.500" y="1.500" width="4.500" height="16" fill="#dfe9ee"/><path d="M2.200 1.500 H5.800 V8 L4 6.500 L2.200 8Z" fill="#5aa0e0"/><path d="M1 17.500 H16" stroke="#6f8594" stroke-width="1.200"/></svg>
<svg class="abs" style="left:564px;top:191px" width="18" height="18" viewBox="0 0 18 18"><path d="M1.500 1 H11 L13.500 3.500 V16.500 H1.500Z" fill="#f4efe9" stroke="#9a9a9a" stroke-width="1"/><rect x="3" y="2.500" width="3.500" height="3.500" fill="#c65a4a"/><path d="M7.500 3.500 H11 M3 8 H11 M3 10.500 H9 M3 13 H7" stroke="#8a6a5a" stroke-width="1"/><path d="M15.500 4 L17.300 5.800 L9.500 13.800 L7 14.800 L7.800 12.200Z" fill="#fff" stroke="#444" stroke-width="1"/></svg>
<svg class="abs" style="left:605px;top:190px" width="21" height="20" viewBox="0 0 21 20"><path d="M14 .5 C16.600 .5 17.400 2.500 17.100 5 C16.900 6.800 16.200 7.800 15.800 8.300 C15.800 9.500 16.100 10 17.800 10.700 C19.800 11.500 20.700 12.300 20.700 14.500 H11.500 C12.500 10 11.500 9 12.200 8.300 C11.800 7.800 11.100 6.800 10.900 5 C10.600 2.500 11.400 .5 14 .5Z" fill="#222"/><path d="M8 3.800 C10.800 3.800 11.600 6 11.300 8.600 C11.100 10.400 10.400 11.400 10 12 C10 13.200 10.300 13.700 12.300 14.500 C14.800 15.500 15.800 16.300 15.800 19.300 H.3 C.3 16.300 1.200 15.500 3.700 14.500 C5.700 13.700 6 13.200 6 12 C5.600 11.400 4.900 10.400 4.700 8.600 C4.400 6 5.200 3.800 8 3.800Z" fill="#222" stroke="#fff" stroke-width=".9"/></svg>
<svg class="abs" style="left:649px;top:190px" width="20" height="19" viewBox="0 0 20 19"><path d="M7 2.500 L9 1 L10.500 2.500 L12.500 .8 L14 2.500 L15.500 1.200 L16.500 3 V6.500 H7Z" fill="#d9604f"/><path d="M8.500 2.500 V6 M11 2.500 V6 M13.500 2.500 V6" stroke="#f5b5a5" stroke-width=".8"/><rect x="1.500" y="6" width="17.500" height="10" rx="1" fill="#cfe9d9" stroke="#4f8f77" stroke-width="1.100"/><rect x="2.500" y="4" width="4" height="2" fill="#4f8f77"/><path d="M1.500 8.200 H19 M1.500 14 H19" stroke="#4f8f77" stroke-width=".9"/><circle cx="10.500" cy="11" r="3.600" fill="#fff" stroke="#2f5f4f" stroke-width="1.300"/><circle cx="10.500" cy="11" r="1.500" fill="#2f5f4f"/><path d="M1 17.300 H19.500" stroke="#4f8f77" stroke-width="1"/></svg>
<svg class="abs" style="left:263px;top:235px" width="18" height="17" viewBox="0 0 18 17"><path d="M3.500 3 L13 .8 L14 3" fill="#d9e9ef" stroke="#7fa9bd" stroke-width=".9"/><rect x=".8" y="3" width="15.500" height="12.500" rx="1.500" fill="#bfe3ef" stroke="#4d8fa8" stroke-width="1.100"/><rect x="2.500" y="5" width="12" height="8.500" fill="none" stroke="#7fbfd5" stroke-width=".8" stroke-dasharray="1.500 1"/><path d="M7 5 V13.500" stroke="#7fbfd5" stroke-width=".8"/><rect x="12" y="7.300" width="5.300" height="4" rx="1" fill="#5f8fa3" stroke="#3f6f85" stroke-width=".8"/></svg>
<svg class="abs" style="left:307px;top:236px" width="16" height="14" viewBox="0 0 16 14"><path d="M8 1 Q9.500 1.500 9 3.500" fill="none" stroke="#999" stroke-width=".8"/><path d="M5 4.500 H11 L11.800 6.200 H4.200Z" fill="#fff" stroke="#444" stroke-width=".9"/><path d="M2.500 6.500 H13.500 L14.500 8.300 H1.500Z" fill="#fff" stroke="#444" stroke-width=".9"/><path d="M1 8.800 H15 Q14.500 11.800 12 11.800 H4 Q1.500 11.800 1 8.800Z" fill="#fff" stroke="#222" stroke-width="1"/><path d="M2.500 13.200 H13.500" stroke="#777" stroke-width=".8"/></svg>
<svg class="abs" style="left:347px;top:235px" width="21" height="17" viewBox="0 0 21 17"><circle cx="15.500" cy="6" r="3.600" fill="#f7e7c7" stroke="#d99a4a" stroke-width="1"/><path d="M15.500 .3 V1.500 M19.800 2 L19 2.900 M20.800 6 H19.800 M11.500 1.800 L12.200 2.700" stroke="#e0a860" stroke-width=".9"/><path d="M5 13.500 Q1.200 13.500 1.200 10.300 Q1.200 7.500 4.200 7.300 Q5 3.500 9 3.500 Q12.500 3.500 13.500 6.800 Q17.500 6.800 17.500 10.200 Q17.500 13.500 14 13.500Z" fill="#fff" stroke="#444" stroke-width="1.100"/><path d="M5 16 H7 M9 16 H13" stroke="#999" stroke-width=".9"/></svg>
<svg class="abs" style="left:391px;top:233px" width="20" height="20" viewBox="0 0 20 20"><path d="M2.500 1 H12.500 V8 H17 V18 H19 V19.500 H.5 V18 H2.500Z" fill="#222"/><g fill="#fff"><rect x="4.200" y="3.500" width="2.600" height="2.300"/><rect x="8.200" y="3.500" width="2.600" height="2.300"/><rect x="4.200" y="8" width="2.600" height="2.300"/><rect x="8.200" y="8" width="2.600" height="2.300"/><rect x="4.200" y="12.500" width="2.600" height="2.300"/><rect x="8.200" y="12.500" width="2.600" height="2.300"/><rect x="14" y="10.500" width="1.600" height="2"/><rect x="14" y="14" width="1.600" height="2"/></g></svg>
<svg class="abs" style="left:432px;top:232px" width="23" height="22" viewBox="0 0 23 22"><circle cx="11.500" cy="11" r="10" fill="#a9cdd9" stroke="#5f8796" stroke-width="1.600"/><circle cx="11.500" cy="11" r="7" fill="#6f97a8"/><circle cx="11.500" cy="11.500" r="3.800" fill="#a9cdd9" stroke="#4f7788" stroke-width="1.200"/><circle cx="11.500" cy="11.500" r="1.500" fill="#4f7788"/><circle cx="14" cy="6.800" r="1.900" fill="#d9503f"/></svg>
<svg class="abs" style="left:476px;top:234px" width="22" height="19" viewBox="0 0 22 19"><path d="M6 1 H16 L21 9.500 L16 18 H6 L1 9.500Z" fill="#fff" stroke="#7a98b8" stroke-width="1.200"/><path d="M5 9.500 V9.600" stroke="#7a98b8" stroke-width="1"/><path d="M6.500 7.800 Q6.500 4.500 11 4.500 Q15.500 4.500 15.500 7.800Z" fill="#4a9fe0"/><rect x="6.300" y="8.600" width="9.400" height="2.300" fill="#2f7fc8"/><path d="M6.500 11.800 H15.500 Q15.500 14.500 13.500 14.500 H8.500 Q6.500 14.500 6.500 11.800Z" fill="#4a9fe0"/><path d="M4 5.500 V13.500" stroke="#b8c8d8" stroke-width=".8" stroke-dasharray="1 1.500"/></svg>
<svg class="abs" style="left:519px;top:233px" width="21" height="20" viewBox="0 0 21 20"><rect x="3" y=".8" width="17" height="18.400" rx="2" fill="#222"/><path d="M.8 4.500 H4.500 M.8 8.200 H4.500 M.8 11.800 H4.500 M.8 15.500 H4.500" stroke="#222" stroke-width="1.500" stroke-linecap="round"/><path d="M2.500 5.500 H4 M2.500 9.200 H4 M2.500 12.800 H4" stroke="#fff" stroke-width=".6"/><circle cx="12" cy="7.800" r="2.900" fill="#fff"/><path d="M6.500 16 Q6.500 11.500 12 11.500 Q17.500 11.500 17.500 16Z" fill="#fff"/></svg>
<svg class="abs" style="left:562px;top:236px" width="19" height="15" viewBox="0 0 19 15"><circle cx="9.500" cy="7.500" r="3.700" fill="#fff" stroke="#222" stroke-width="1.100"/><g fill="#444"><circle cx="9.500" cy="1.300" r=".9"/><circle cx="9.500" cy="13.700" r=".9"/><circle cx="3.300" cy="7.500" r=".9"/><circle cx="15.700" cy="7.500" r=".9"/><circle cx="5.100" cy="3.100" r=".9"/><circle cx="13.900" cy="3.100" r=".9"/><circle cx="5.100" cy="11.900" r=".9"/><circle cx="13.900" cy="11.900" r=".9"/></g></svg>
<svg class="abs" style="left:606px;top:233px" width="21" height="21" viewBox="0 0 21 21"><path d="M2.500 1 H18.500 L20 18 Q20 20 18 20 H3 Q1 20 1 18Z" fill="#222"/><path d="M6 4.500 Q6.500 9.500 10.500 9.500 Q14.500 9.500 15 4.500" fill="none" stroke="#fff" stroke-width="1.300" stroke-linecap="round"/></svg>
<svg class="abs" style="left:647px;top:232px" width="23" height="22" viewBox="0 0 23 22"><rect x="1" y="1" width="16.500" height="19.500" rx="2" fill="#fff" stroke="#8a6a5a" stroke-width="1.200"/><path d="M5.500 7 H13 M5.500 10.500 H13 M5.500 14 H11.500" stroke="#666" stroke-width="1.200"/><path d="M20.500 6 L13.500 17.500" stroke="#4a6a9a" stroke-width="2"/><path d="M13.500 17.500 L12.800 19.200" stroke="#444" stroke-width="1.200"/></svg>
<svg class="abs" style="left:266px;top:277px" width="12" height="19" viewBox="0 0 12 19"><path d="M1.500 1 H10.500 M1.500 18 H10.500" stroke="#7fa9a5" stroke-width="1.300"/><path d="M2.500 1.500 V4 Q2.500 6.500 5.500 9.500 Q2.500 12.500 2.500 15 V17.500 H9.500 V15 Q9.500 12.500 6.500 9.500 Q9.500 6.500 9.500 4 V1.500Z" fill="#fbf6e0" stroke="#5f9f9a" stroke-width="1"/><path d="M3.500 15.500 Q6 12.500 8.500 15.500 V17 H3.500Z" fill="#bfe3df"/><path d="M3.800 4.500 H8.200 L6 7.500Z" fill="#f0dfa0"/></svg>
<svg class="abs" style="left:306px;top:277px" width="18" height="19" viewBox="0 0 18 19"><rect x=".3" y=".5" width="17.400" height="18" rx=".8" fill="#222"/><text x="9" y="6.800" font-family="Liberation Sans,sans-serif" font-size="5.800" font-weight="bold" fill="#fff" text-anchor="middle" letter-spacing=".3">SALE</text><rect x="2" y="8" width="14" height="8.800" fill="#fff"/><path d="M3.500 10.500 H13.500 M11.500 9.200 L14 10.500 L11.500 11.800Z M4.500 14.200 H14.500" stroke="#222" stroke-width="1.100" fill="#222"/><circle cx="6" cy="14.200" r="1.300" fill="#222"/></svg>
<svg class="abs" style="left:347px;top:275px" width="21" height="23" viewBox="0 0 21 23"><rect x=".8" y="1" width="19.400" height="14.500" rx="1.500" fill="#5f8f9f"/><rect x="2.300" y="2.800" width="16.400" height="10" fill="#a9c9d5"/><path d="M3.500 10.500 L6 7 L8 9.500 L10 6.500 L12 9.500 L14 7.500 L17.500 4" fill="none" stroke="#b8505a" stroke-width="1"/><path d="M10.500 15.500 V19 M10.500 19 L6.500 22 M10.500 19 L14.500 22" stroke="#777" stroke-width="1.100" fill="none"/></svg>
<svg class="abs" style="left:392px;top:279px" width="17" height="15" viewBox="0 0 17 15"><circle cx="5.500" cy="5" r="4.300" fill="#fff" stroke="#222" stroke-width="1.100"/><path d="M5.500 1 V14 M2.500 2.500 L8.500 7.500 M8.500 2.500 L2.500 7.500 M1.500 5 H9.500" stroke="#222" stroke-width=".8"/><circle cx="12.500" cy="8.500" r="3.200" fill="#fff" stroke="#222" stroke-width="1"/><path d="M12.500 5.500 V14 M10.300 6.500 L14.700 10.500 M14.700 6.500 L10.300 10.500" stroke="#222" stroke-width=".8"/><path d="M9.500 11 L8 14" stroke="#222" stroke-width=".8"/></svg>
<svg class="abs" style="left:434px;top:275px" width="20" height="23" viewBox="0 0 20 23"><rect x="1" y="1" width="16" height="19" rx="2" fill="#fbf8f3" stroke="#8a7a72" stroke-width="1.200"/><path d="M5 6 H12.500 M5 12 H9" stroke="#c9b9a9" stroke-width="1"/><circle cx="12.500" cy="15" r="3.800" fill="#bfdde5" stroke="#5f8f9f" stroke-width="1.300"/><path d="M15.300 17.800 L18.500 21.500" stroke="#6f7f8f" stroke-width="1.500"/></svg>
<svg class="abs" style="left:479px;top:279px" width="16" height="16" viewBox="0 0 16 16"><path d="M1 6 Q.5 3.500 3 3.300 Q3.500 1 6 1.800 Q8 -.2 10 1.800 Q12.500 1 13 3.300 Q15.500 3.500 15 6Z" fill="#222"/><path d="M1.500 6.800 H14.500 L13 15.500 H3Z" fill="#222"/><path d="M5 8 L5.500 14.500 M8 8 V14.500 M11 8 L10.500 14.500" stroke="#fff" stroke-width="1"/></svg>
<svg class="abs" style="left:521px;top:279px" width="18" height="15" viewBox="0 0 18 15"><ellipse cx="9" cy="9.500" rx="5.500" ry="4" fill="#222"/><path d="M4 7 Q1 6 1.500 2.500 L3 .8 L3.500 3 L5.500 1.500 Q6 5 5 6.500Z M14 7 Q17 6 16.500 2.500 L15 .8 L14.500 3 L12.500 1.500 Q12 5 13 6.500Z" fill="#222"/><path d="M4 9 L.8 9.500 M4 10.500 L1 12 M4.800 12 L2.500 14.200 M14 9 L17.200 9.500 M14 10.500 L17 12 M13.200 12 L15.500 14.200" stroke="#222" stroke-width="1.200" stroke-linecap="round"/></svg>
<svg class="abs" style="left:565px;top:277px" width="14" height="19" viewBox="0 0 14 19"><path d="M2 6 Q2 1 7 1 Q12 1 12 6Z" fill="#f2dc7a" stroke="#8a7a3a" stroke-width=".9"/><path d="M1 6 H13" stroke="#8a7a3a" stroke-width="1"/><path d="M3 6.500 Q3 11.500 7 11.500 Q11 11.500 11 6.500Z" fill="#fbeee0" stroke="#8a7a6a" stroke-width=".8"/><path d="M1.500 18.500 V12.500 Q4 11.500 7 12 Q10 11.500 12.500 12.500 V18.500Z" fill="#f5efc5" stroke="#8a8a5a" stroke-width=".9"/><path d="M5 12.500 V18.500 M9 12.500 V18.500 M5 15 H9" stroke="#8a8a5a" stroke-width=".8"/></svg>
<svg class="abs" style="left:607px;top:279px" width="17" height="16" viewBox="0 0 17 16"><path d="M5 5 L6 1.500 L9.500 .8" fill="none" stroke="#222" stroke-width="1"/><path d="M1 4.500 H8.500 V6 H8 L7.500 15 H2 L1.500 6 H1Z" fill="#fff" stroke="#222" stroke-width="1"/><path d="M1.800 8 H7.800 L7.500 15 H2Z" fill="#222"/><path d="M9 9.500 Q9 6.500 12.500 6.500 Q16 6.500 16 9.500Z" fill="#555"/><rect x="9" y="10.300" width="7" height="2" fill="#777"/><rect x="9" y="13" width="7" height="2.300" rx=".8" fill="#444"/></svg>
<svg class="abs" style="left:652px;top:280px" width="14" height="14" viewBox="0 0 14 14"><path d="M5.800 2.300 Q5.800 .7 7 .7 Q8.200 .7 8.200 2.300" fill="none" stroke="#222" stroke-width=".9"/><path d="M3.200 12.500 V7 Q3.200 2.500 7 2.500 Q10.800 2.500 10.800 7 V12.500Z" fill="#fff" stroke="#222" stroke-width="1"/><path d="M3.200 8.500 Q1.800 9 1.800 10.500 V12 H3.200 M10.800 8.500 Q12.200 9 12.200 10.500 V12 H10.800" fill="none" stroke="#444" stroke-width=".8"/><path d="M5.800 11 V6.800 H7.500 Q8.800 6.800 8.800 8 Q8.800 9.200 7.500 9.200 H5.800" fill="none" stroke="#222" stroke-width=".9"/></svg>
<div class="abs" style="left:250px;top:315.500px;width:432px;height:21px;background:#f3f3f3"></div>
<span class="t" style="left:259px;top:320.500px;font-size:12px;font-weight:bold;color:#333">预设</span>
<span class="t" style="left:259px;top:343.5px;font-size:12px;color:#3a3a3a">线条</span>
<div class="hl" style="left:289px;top:347px;width:379px"></div>
<span class="t" style="left:259px;top:396.0px;font-size:12px;color:#3a3a3a">矩形</span>
<div class="hl" style="left:290px;top:400px;width:378px"></div>
<span class="t" style="left:259px;top:449.5px;font-size:12px;color:#3a3a3a">基本形状</span>
<div class="hl" style="left:314px;top:453px;width:354px"></div>
<span class="t" style="left:259px;top:550.0px;font-size:12px;color:#3a3a3a">箭头总汇</span>
<div class="hl" style="left:314px;top:554px;width:354px"></div>
<span class="t" style="left:259px;top:627.0px;font-size:12px;color:#3a3a3a">公式形状</span>
<div class="hl" style="left:314px;top:631px;width:354px"></div>
<span class="t" style="left:259px;top:680.0px;font-size:12px;color:#3a3a3a">流程图</span>
<div class="hl" style="left:303px;top:684px;width:313px"></div>
<span class="t" style="left:259px;top:757.0px;font-size:12px;color:#3a3a3a">星与旗帜</span>
<div class="hl" style="left:314px;top:761px;width:302px"></div>
<div class="abs" style="left:519.500px;top:363px;width:19px;height:18.500px;background:#d9dde8"></div>
<div class="abs" style="left:509px;top:352px;width:48px;height:42px;border:3px solid #c3413c"></div>
<svg class="abs" style="left:558px;top:368px" width="46" height="19" viewBox="0 0 46 19"><path d="M1.500 9.800 L19 1.800 L21.500 6.300 L44.500 8.200 V11.600 L21.500 13.300 L19 17.800Z" fill="#e13a36"/></svg>
<div class="abs" style="left:532.500px;top:395.500px;width:66.500px;height:26px;background:#fff;border:1px solid #c9c9c9;box-shadow:1px 1px 2px rgba(0,0,0,.12)"></div>
<span class="t" style="left:542px;top:402.500px;font-size:12px;color:#333">自由曲线</span>
<svg class="abs" style="left:668px;top:336px" width="24" height="449" viewBox="0 0 24 449"><path d="M3 5.500 Q3 2.500 6 2.500 H7 Q9.500 2.500 9.500 5.500 V336 L7.500 339 H5.500 L3 333Z" fill="#b2b2b2"/><path d="M9.500 346 L15.500 344 V403 L14 406 H11.500 L9.500 400Z" fill="#b6b6b6"/><path d="M16.500 413 L22 411 V449 H16Z" fill="#b9b9b9"/></svg>
<div class="hl" style="left:662px;top:698px;width:10px;background:#dadada"></div>
<div class="abs" style="left:249px;top:768px;width:433px;height:17px;background:#fff;border-top:1px solid #c2c2c2"></div>
<svg class="abs" style="left:258px;top:776px" width="15" height="14" viewBox="0 0 15 14"><path d="M1 14 V2.500 Q1 1 2.500 1 H8.500 Q10 1 10 2.500 V6" fill="none" stroke="#333" stroke-width="1.300"/><circle cx="9.500" cy="11.500" r="4.300" fill="#fff" stroke="#333" stroke-width="1.200"/></svg>
<span class="t" style="left:282.500px;top:779px;font-size:12px;color:#222">新建绘图画布(N)</span>
<svg class="abs" style="left:256.0px;top:364.0px" width="18" height="18" viewBox="0 0 18 18" ><g fill="none" stroke="#6b8798" stroke-width="1" stroke-linejoin="round" stroke-linecap="round"><path d="M2 2 L16 16"/></g></svg>
<svg class="abs" style="left:280.0px;top:364.0px" width="18" height="18" viewBox="0 0 18 18" ><g fill="none" stroke="#6b8798" stroke-width="1" stroke-linejoin="round" stroke-linecap="round"><path d="M2 2 L15 15"/><polygon points="16.50,16.50 12.05,15.02 15.02,12.05" fill="#6b8798" stroke="none"/></g></svg>
<svg class="abs" style="left:304.0px;top:364.0px" width="18" height="18" viewBox="0 0 18 18" ><g fill="none" stroke="#6b8798" stroke-width="1" stroke-linejoin="round" stroke-linecap="round"><path d="M3.5 3.5 L14.5 14.5"/><polygon points="16.50,16.50 12.05,15.02 15.02,12.05" fill="#6b8798" stroke="none"/><polygon points="1.50,1.50 5.95,2.98 2.98,5.95" fill="#6b8798" stroke="none"/></g></svg>
<svg class="abs" style="left:328.0px;top:364.0px" width="18" height="18" viewBox="0 0 18 18" ><g fill="none" stroke="#6b8798" stroke-width="1" stroke-linejoin="round" stroke-linecap="round"><path d="M3 4 H9 V14 H16"/></g></svg>
<svg class="abs" style="left:352.0px;top:364.0px" width="18" height="18" viewBox="0 0 18 18" ><g fill="none" stroke="#6b8798" stroke-width="1" stroke-linejoin="round" stroke-linecap="round"><path d="M3 4 H9 V14 H14"/><polygon points="17.00,14.00 12.80,16.10 12.80,11.90" fill="#6b8798" stroke="none"/></g></svg>
<svg class="abs" style="left:376.0px;top:364.0px" width="18" height="18" viewBox="0 0 18 18" ><g fill="none" stroke="#6b8798" stroke-width="1" stroke-linejoin="round" stroke-linecap="round"><path d="M4 4 H9 V14 H14"/><polygon points="17.00,14.00 12.80,16.10 12.80,11.90" fill="#6b8798" stroke="none"/><polygon points="1.00,4.00 5.20,1.90 5.20,6.10" fill="#6b8798" stroke="none"/></g></svg>
<svg class="abs" style="left:400.0px;top:364.0px" width="18" height="18" viewBox="0 0 18 18" ><g fill="none" stroke="#6b8798" stroke-width="1" stroke-linejoin="round" stroke-linecap="round"><path d="M3 4 H8 C12 4 12 8 9 9 C5 10.5 6 14 10 14 H16"/></g></svg>
<svg class="abs" style="left:424.0px;top:364.0px" width="18" height="18" viewBox="0 0 18 18" ><g fill="none" stroke="#6b8798" stroke-width="1" stroke-linejoin="round" stroke-linecap="round"><path d="M3 4 H8 C12 4 12 8 9 9 C5 10.5 6 14 10 14 H14"/><polygon points="17.00,14.00 12.80,16.10 12.80,11.90" fill="#6b8798" stroke="none"/></g></svg>
<svg class="abs" style="left:448.0px;top:364.0px" width="18" height="18" viewBox="0 0 18 18" ><g fill="none" stroke="#6b8798" stroke-width="1" stroke-linejoin="round" stroke-linecap="round"><path d="M4 4 H8 C12 4 12 8 9 9 C5 10.5 6 14 10 14 H14"/><polygon points="17.00,14.00 12.80,16.10 12.80,11.90" fill="#6b8798" stroke="none"/><polygon points="1.00,4.00 5.20,1.90 5.20,6.10" fill="#6b8798" stroke="none"/></g></svg>
<svg class="abs" style="left:472.0px;top:364.0px" width="18" height="18" viewBox="0 0 18 18" ><g fill="none" stroke="#6b8798" stroke-width="1" stroke-linejoin="round" stroke-linecap="round"><path d="M15 4.5 C13.5 2 7 2 6.5 6 C6 9.5 12.5 9 11.5 12.5 C10.5 15.8 6 15.5 3.5 13.5"/></g></svg>
<svg class="abs" style="left:496.0px;top:364.0px" width="18" height="18" viewBox="0 0 18 18" ><g fill="none" stroke="#6b8798" stroke-width="1" stroke-linejoin="round" stroke-linecap="round"><path d="M2.5 16 V8.5 L5 6.5 L7.5 9 C6 5 8 2.5 10.5 2.5 C13.5 2.5 14 5 13 6.8 L15.5 6.8 V16 Z"/></g></svg>
<svg class="abs" style="left:520.0px;top:364.0px" width="18" height="18" viewBox="0 0 18 18" ><g fill="none" stroke="#6b8798" stroke-width="1" stroke-linejoin="round" stroke-linecap="round"><path d="M14 2.5 C11 2 7 4 6 7 C5 10 6 12 8 11.5 C10.5 11 12 8 13.5 6 C11 9 7 12 5 15.5 C8 13 11 12.5 14.5 13.5" stroke="#5a6fae" stroke-width=".9"/></g></svg>
<svg class="abs" style="left:256.0px;top:417.0px" width="18" height="18" viewBox="0 0 18 18" ><g fill="none" stroke="#6b8798" stroke-width="1" stroke-linejoin="round" stroke-linecap="round"><path d="M1.5 1.5 H16.5 V16.5 H1.5 Z"/></g></svg>
<svg class="abs" style="left:280.0px;top:417.0px" width="18" height="18" viewBox="0 0 18 18" ><g fill="none" stroke="#6b8798" stroke-width="1" stroke-linejoin="round" stroke-linecap="round"><rect x="1.5" y="1.5" width="15" height="15" rx="3"/></g></svg>
<svg class="abs" style="left:304.0px;top:417.0px" width="18" height="18" viewBox="0 0 18 18" ><g fill="none" stroke="#6b8798" stroke-width="1" stroke-linejoin="round" stroke-linecap="round"><path d="M1.5 2.5 H12 L16.5 7 V14.5 H1.5 Z"/></g></svg>
<svg class="abs" style="left:328.0px;top:417.0px" width="18" height="18" viewBox="0 0 18 18" ><g fill="none" stroke="#6b8798" stroke-width="1" stroke-linejoin="round" stroke-linecap="round"><path d="M1.5 7 L6 2.5 H12 L16.5 7 V14.5 H1.5 Z"/></g></svg>
<svg class="abs" style="left:352.0px;top:417.0px" width="18" height="18" viewBox="0 0 18 18" ><g fill="none" stroke="#6b8798" stroke-width="1" stroke-linejoin="round" stroke-linecap="round"><path d="M1.5 2.5 H12 L16.5 7 V14.5 H6 L1.5 10 Z"/></g></svg>
<svg class="abs" style="left:376.0px;top:417.0px" width="18" height="18" viewBox="0 0 18 18" ><g fill="none" stroke="#6b8798" stroke-width="1" stroke-linejoin="round" stroke-linecap="round"><path d="M1.5 2.5 H11 Q16.5 2.5 16.5 8 V14.5 H1.5 Z"/></g></svg>
<svg class="abs" style="left:400.0px;top:417.0px" width="18" height="18" viewBox="0 0 18 18" ><g fill="none" stroke="#6b8798" stroke-width="1" stroke-linejoin="round" stroke-linecap="round"><path d="M1.5 2.5 H16.5 V14.5 H1.5 Z"/></g></svg>
<svg class="abs" style="left:424.0px;top:417.0px" width="18" height="18" viewBox="0 0 18 18" ><g fill="none" stroke="#6b8798" stroke-width="1" stroke-linejoin="round" stroke-linecap="round"><path d="M1.5 2.5 H14.5 Q16.5 2.5 16.5 4.5 V14.5 H1.5 Z"/></g></svg>
<svg class="abs" style="left:448.0px;top:417.0px" width="18" height="18" viewBox="0 0 18 18" ><g fill="none" stroke="#6b8798" stroke-width="1" stroke-linejoin="round" stroke-linecap="round"><path d="M1.5 2.5 H16.5 V12.5 Q16.5 14.5 14.5 14.5 H1.5 Z"/></g></svg>
<svg class="abs" style="left:256.0px;top:470.0px" width="18" height="18" viewBox="0 0 18 18" ><g fill="none" stroke="#6b8798" stroke-width="1" stroke-linejoin="round" stroke-linecap="round"><path d="M1.5 1.5 H16.5 V16.5 H1.5 Z M3.5 13.5 H14.5"/><path d="M4 10.5 L6 4.5 L8 10.5 M4.8 8.5 H7.2 M10.5 6 H14.5 M10.5 9 H14.5"/></g></svg>
<svg class="abs" style="left:280.0px;top:470.0px" width="18" height="18" viewBox="0 0 18 18" ><g fill="none" stroke="#6b8798" stroke-width="1" stroke-linejoin="round" stroke-linecap="round"><path d="M1.5 1.5 H16.5 V16.5 H1.5 Z"/><path d="M4.5 4 V14 M7 4 V14 M9.5 12 L11.5 5 L13.5 12 M10.2 10 H12.8 M14.8 5 V7 M14.8 9 V13"/></g></svg>
<svg class="abs" style="left:304.0px;top:470.0px" width="18" height="18" viewBox="0 0 18 18" ><g fill="none" stroke="#6b8798" stroke-width="1" stroke-linejoin="round" stroke-linecap="round"><circle cx="9" cy="9" r="7.5"/></g></svg>
<svg class="abs" style="left:328.0px;top:470.0px" width="18" height="18" viewBox="0 0 18 18" ><g fill="none" stroke="#6b8798" stroke-width="1" stroke-linejoin="round" stroke-linecap="round"><path d="M9 1.5 L16.5 16 H1.5 Z"/></g></svg>
<svg class="abs" style="left:352.0px;top:470.0px" width="18" height="18" viewBox="0 0 18 18" ><g fill="none" stroke="#6b8798" stroke-width="1" stroke-linejoin="round" stroke-linecap="round"><path d="M2 1.5 L16.5 16 H2 Z"/></g></svg>
<svg class="abs" style="left:376.0px;top:470.0px" width="18" height="18" viewBox="0 0 18 18" ><g fill="none" stroke="#6b8798" stroke-width="1" stroke-linejoin="round" stroke-linecap="round"><path d="M5.5 2.5 H17 L12.5 15.5 H1 Z"/></g></svg>
<svg class="abs" style="left:400.0px;top:470.0px" width="18" height="18" viewBox="0 0 18 18" ><g fill="none" stroke="#6b8798" stroke-width="1" stroke-linejoin="round" stroke-linecap="round"><path d="M5 3 H13 L16.5 15 H1.5 Z"/></g></svg>
<svg class="abs" style="left:424.0px;top:470.0px" width="18" height="18" viewBox="0 0 18 18" ><g fill="none" stroke="#6b8798" stroke-width="1" stroke-linejoin="round" stroke-linecap="round"><path d="M9 1.5 L16.5 9 L9 16.5 L1.5 9 Z"/></g></svg>
<svg class="abs" style="left:448.0px;top:470.0px" width="18" height="18" viewBox="0 0 18 18" ><g fill="none" stroke="#6b8798" stroke-width="1" stroke-linejoin="round" stroke-linecap="round"><polygon points="9.00,1.60 16.61,7.13 13.70,16.07 4.30,16.07 1.39,7.13"/></g></svg>
<svg class="abs" style="left:472.0px;top:470.0px" width="18" height="18" viewBox="0 0 18 18" ><g fill="none" stroke="#6b8798" stroke-width="1" stroke-linejoin="round" stroke-linecap="round"><polygon points="17.00,9.00 13.00,15.93 5.00,15.93 1.00,9.00 5.00,2.07 13.00,2.07"/></g></svg>
<svg class="abs" style="left:496.0px;top:470.0px" width="18" height="18" viewBox="0 0 18 18" ><g fill="none" stroke="#6b8798" stroke-width="1" stroke-linejoin="round" stroke-linecap="round"><polygon points="9.00,1.70 14.94,4.56 16.41,10.99 12.30,16.15 5.70,16.15 1.59,10.99 3.06,4.56"/><text x="9" y="11.6" font-size="6.5" font-family="Liberation Sans,sans-serif" text-anchor="middle" fill="#6b8798" stroke="none" font-weight="bold">7</text></g></svg>
<svg class="abs" style="left:520.0px;top:470.0px" width="18" height="18" viewBox="0 0 18 18" ><g fill="none" stroke="#6b8798" stroke-width="1" stroke-linejoin="round" stroke-linecap="round"><polygon points="11.91,1.98 16.02,6.09 16.02,11.91 11.91,16.02 6.09,16.02 1.98,11.91 1.98,6.09 6.09,1.98"/><text x="9" y="11.6" font-size="6.5" font-family="Liberation Sans,sans-serif" text-anchor="middle" fill="#6b8798" stroke="none" font-weight="bold">8</text></g></svg>
<svg class="abs" style="left:544.0px;top:470.0px" width="18" height="18" viewBox="0 0 18 18" ><g fill="none" stroke="#6b8798" stroke-width="1" stroke-linejoin="round" stroke-linecap="round"><polygon points="9.00,1.40 13.47,2.85 16.23,6.65 16.23,11.35 13.47,15.15 9.00,16.60 4.53,15.15 1.77,11.35 1.77,6.65 4.53,2.85"/><text x="9" y="11.6" font-size="6.5" font-family="Liberation Sans,sans-serif" text-anchor="middle" fill="#6b8798" stroke="none" font-weight="bold">10</text></g></svg>
<svg class="abs" style="left:568.0px;top:470.0px" width="18" height="18" viewBox="0 0 18 18" ><g fill="none" stroke="#6b8798" stroke-width="1" stroke-linejoin="round" stroke-linecap="round"><polygon points="10.97,1.66 14.37,3.63 16.34,7.03 16.34,10.97 14.37,14.37 10.97,16.34 7.03,16.34 3.63,14.37 1.66,10.97 1.66,7.03 3.63,3.63 7.03,1.66"/><text x="9" y="11.6" font-size="6.5" font-family="Liberation Sans,sans-serif" text-anchor="middle" fill="#6b8798" stroke="none" font-weight="bold">12</text></g></svg>
<svg class="abs" style="left:592.0px;top:470.0px" width="18" height="18" viewBox="0 0 18 18" ><g fill="none" stroke="#6b8798" stroke-width="1" stroke-linejoin="round" stroke-linecap="round"><path d="M9 1.5 A7.5 7.5 0 1 0 16.5 9 H9 Z"/></g></svg>
<svg class="abs" style="left:616.0px;top:470.0px" width="18" height="18" viewBox="0 0 18 18" ><g fill="none" stroke="#6b8798" stroke-width="1" stroke-linejoin="round" stroke-linecap="round"><path d="M5.6 2.3 L16.3 10.6 A7.5 7.5 0 1 1 5.6 2.3 Z"/></g></svg>
<svg class="abs" style="left:640.0px;top:470.0px" width="18" height="18" viewBox="0 0 18 18" ><g fill="none" stroke="#6b8798" stroke-width="1" stroke-linejoin="round" stroke-linecap="round"><path d="M9 1.5 H16.5 V9 A7.5 7.5 0 1 1 9 1.5 Z"/></g></svg>
<svg class="abs" style="left:256.0px;top:494.0px" width="18" height="18" viewBox="0 0 18 18" ><g fill="none" stroke="#6b8798" stroke-width="1" stroke-linejoin="round" stroke-linecap="round"><path d="M1.5 1.5 H16.5 V16.5 H1.5 Z M4 4 H14 V14 H4 Z"/></g></svg>
<svg class="abs" style="left:280.0px;top:494.0px" width="18" height="18" viewBox="0 0 18 18" ><g fill="none" stroke="#6b8798" stroke-width="1" stroke-linejoin="round" stroke-linecap="round"><path d="M2 16 V2 H16 M4.5 16 V4.5 H16"/></g></svg>
<svg class="abs" style="left:304.0px;top:494.0px" width="18" height="18" viewBox="0 0 18 18" ><g fill="none" stroke="#6b8798" stroke-width="1" stroke-linejoin="round" stroke-linecap="round"><path d="M2 2 H8 V10 H16 V16 H2 Z"/></g></svg>
<svg class="abs" style="left:328.0px;top:494.0px" width="18" height="18" viewBox="0 0 18 18" ><g fill="none" stroke="#6b8798" stroke-width="1" stroke-linejoin="round" stroke-linecap="round"><path d="M2 16 V12 L12 2 H16 V6 L6 16 Z"/></g></svg>
<svg class="abs" style="left:352.0px;top:494.0px" width="18" height="18" viewBox="0 0 18 18" ><g fill="none" stroke="#6b8798" stroke-width="1" stroke-linejoin="round" stroke-linecap="round"><path d="M6 1.5 H12 V6 H16.5 V12 H12 V16.5 H6 V12 H1.5 V6 H6 Z"/></g></svg>
<svg class="abs" style="left:376.0px;top:494.0px" width="18" height="18" viewBox="0 0 18 18" ><g fill="none" stroke="#6b8798" stroke-width="1" stroke-linejoin="round" stroke-linecap="round"><path d="M5 1.5 H13 Q13 5 16.5 5 V13 Q13 13 13 16.5 H5 Q5 13 1.5 13 V5 Q5 5 5 1.5 Z"/></g></svg>
<svg class="abs" style="left:400.0px;top:494.0px" width="18" height="18" viewBox="0 0 18 18" ><g fill="none" stroke="#6b8798" stroke-width="1" stroke-linejoin="round" stroke-linecap="round"><path d="M3 4 V14 A6 2.3 0 0 0 15 14 V4"/><ellipse cx="9" cy="4" rx="6" ry="2.3"/></g></svg>
<svg class="abs" style="left:424.0px;top:494.0px" width="18" height="18" viewBox="0 0 18 18" ><g fill="none" stroke="#6b8798" stroke-width="1" stroke-linejoin="round" stroke-linecap="round"><path d="M2 5.5 H12.5 V16 H2 Z M2 5.5 L5.5 2 H16 V12.5 L12.5 16 M12.5 5.5 L16 2"/></g></svg>
<svg class="abs" style="left:448.0px;top:494.0px" width="18" height="18" viewBox="0 0 18 18" ><g fill="none" stroke="#6b8798" stroke-width="1" stroke-linejoin="round" stroke-linecap="round"><path d="M1.5 1.5 H16.5 V16.5 H1.5 Z M4.5 4.5 H13.5 V13.5 H4.5 Z M1.5 1.5 L4.5 4.5 M16.5 1.5 L13.5 4.5 M1.5 16.5 L4.5 13.5 M16.5 16.5 L13.5 13.5"/></g></svg>
<svg class="abs" style="left:472.0px;top:494.0px" width="18" height="18" viewBox="0 0 18 18" ><g fill="none" stroke="#6b8798" stroke-width="1" stroke-linejoin="round" stroke-linecap="round"><circle cx="9" cy="9" r="7.5"/><circle cx="9" cy="9" r="4.3"/></g></svg>
<svg class="abs" style="left:496.0px;top:494.0px" width="18" height="18" viewBox="0 0 18 18" ><g fill="none" stroke="#6b8798" stroke-width="1" stroke-linejoin="round" stroke-linecap="round"><circle cx="9" cy="9" r="7.5"/><circle cx="9" cy="9" r="5"/><path d="M4.6 11.4 L11.4 4.6 M6.6 13.4 L13.4 6.6"/></g></svg>
<svg class="abs" style="left:520.0px;top:494.0px" width="18" height="18" viewBox="0 0 18 18" ><g fill="none" stroke="#6b8798" stroke-width="1" stroke-linejoin="round" stroke-linecap="round"><path d="M1.5 13 A7.5 7.5 0 0 1 16.5 13 H12.8 A3.8 3.8 0 0 0 5.2 13 Z"/></g></svg>
<svg class="abs" style="left:544.0px;top:494.0px" width="18" height="18" viewBox="0 0 18 18" ><g fill="none" stroke="#6b8798" stroke-width="1" stroke-linejoin="round" stroke-linecap="round"><path d="M2 2 H16 V12 L12 16 H2 Z M16 12 Q13 12 12.5 12.5 Q12 13 12 16"/></g></svg>
<svg class="abs" style="left:568.0px;top:494.0px" width="18" height="18" viewBox="0 0 18 18" ><g fill="none" stroke="#6b8798" stroke-width="1" stroke-linejoin="round" stroke-linecap="round"><circle cx="9" cy="9" r="7.5"/><path d="M5.5 11.5 Q9 14.5 12.5 11.5"/><circle cx="6.5" cy="7" r=".7" fill="#6b8798"/><circle cx="11.5" cy="7" r=".7" fill="#6b8798"/></g></svg>
<svg class="abs" style="left:592.0px;top:494.0px" width="18" height="18" viewBox="0 0 18 18" ><g fill="none" stroke="#6b8798" stroke-width="1" stroke-linejoin="round" stroke-linecap="round"><path d="M9 5 C9 2 5 1.5 3 3 C0.5 5 1.5 8.5 4 11 L9 15.5 L14 11 C16.5 8.5 17.5 5 15 3 C13 1.5 9 2 9 5 Z"/></g></svg>
<svg class="abs" style="left:616.0px;top:494.0px" width="18" height="18" viewBox="0 0 18 18" ><g fill="none" stroke="#6b8798" stroke-width="1" stroke-linejoin="round" stroke-linecap="round"><path d="M2 5 L7 2.5 L10 6 L11.5 5.5 L14 9.5 L12.8 10 L17 15.5 L8.5 11.5 L10 10.8 L6 8.5 L7.5 7.8 Z"/></g></svg>
<svg class="abs" style="left:640.0px;top:494.0px" width="18" height="18" viewBox="0 0 18 18" ><g fill="none" stroke="#6b8798" stroke-width="1" stroke-linejoin="round" stroke-linecap="round"><circle cx="9" cy="9" r="4.2"/><path d="M14.77 7.34 L17.00 9.00 L14.77 10.66 Z" stroke-width=".7"/><path d="M14.25 11.90 L14.66 14.66 L11.90 14.25 Z" stroke-width=".7"/><path d="M10.66 14.77 L9.00 17.00 L7.34 14.77 Z" stroke-width=".7"/><path d="M6.10 14.25 L3.34 14.66 L3.75 11.90 Z" stroke-width=".7"/><path d="M3.23 10.66 L1.00 9.00 L3.23 7.34 Z" stroke-width=".7"/><path d="M3.75 6.10 L3.34 3.34 L6.10 3.75 Z" stroke-width=".7"/><path d="M7.34 3.23 L9.00 1.00 L10.66 3.23 Z" stroke-width=".7"/><path d="M11.90 3.75 L14.66 3.34 L14.25 6.10 Z" stroke-width=".7"/></g></svg>
<svg class="abs" style="left:256.0px;top:518.0px" width="18" height="18" viewBox="0 0 18 18" ><g fill="none" stroke="#6b8798" stroke-width="1" stroke-linejoin="round" stroke-linecap="round"><path d="M12 1.5 A8 8 0 1 0 12 16.5 A10 10 0 0 1 12 1.5 Z"/></g></svg>
<svg class="abs" style="left:280.0px;top:518.0px" width="18" height="18" viewBox="0 0 18 18" ><g fill="none" stroke="#6b8798" stroke-width="1" stroke-linejoin="round" stroke-linecap="round"><path d="M5 13.5 C1.5 14 0.5 10 3 8.5 C1.5 5.5 5 3.5 6.5 5.5 C7.5 2.5 12 2.5 12.5 5.5 C15.5 4.5 17.5 8 15 10 C17 12.5 13.5 15 11.5 13.5 C10 16 6 15.5 5 13.5 Z"/></g></svg>
<svg class="abs" style="left:304.0px;top:518.0px" width="18" height="18" viewBox="0 0 18 18" ><g fill="none" stroke="#6b8798" stroke-width="1" stroke-linejoin="round" stroke-linecap="round"><path d="M2 3 C10 3 15 8 15 16"/></g></svg>
<svg class="abs" style="left:328.0px;top:518.0px" width="18" height="18" viewBox="0 0 18 18" ><g fill="none" stroke="#6b8798" stroke-width="1" stroke-linejoin="round" stroke-linecap="round"><path d="M6 2 Q3 2 3 4.5 V13.5 Q3 16 6 16 M12 2 Q15 2 15 4.5 V13.5 Q15 16 12 16"/></g></svg>
<svg class="abs" style="left:352.0px;top:518.0px" width="18" height="18" viewBox="0 0 18 18" ><g fill="none" stroke="#6b8798" stroke-width="1" stroke-linejoin="round" stroke-linecap="round"><path d="M7 2 Q5 2 5 4 V7 Q5 9 3 9 Q5 9 5 11 V14 Q5 16 7 16 M11 2 Q13 2 13 4 V7 Q13 9 15 9 Q13 9 13 11 V14 Q13 16 11 16"/></g></svg>
<svg class="abs" style="left:376.0px;top:518.0px" width="18" height="18" viewBox="0 0 18 18" ><g fill="none" stroke="#6b8798" stroke-width="1" stroke-linejoin="round" stroke-linecap="round"><path d="M7 2 Q4 2 4 4.5 V13.5 Q4 16 7 16"/></g></svg>
<svg class="abs" style="left:400.0px;top:518.0px" width="18" height="18" viewBox="0 0 18 18" ><g fill="none" stroke="#6b8798" stroke-width="1" stroke-linejoin="round" stroke-linecap="round"><path d="M11 2 Q14 2 14 4.5 V13.5 Q14 16 11 16"/></g></svg>
<svg class="abs" style="left:424.0px;top:518.0px" width="18" height="18" viewBox="0 0 18 18" ><g fill="none" stroke="#6b8798" stroke-width="1" stroke-linejoin="round" stroke-linecap="round"><path d="M10 2 Q8 2 8 4 V7 Q8 9 6 9 Q8 9 8 11 V14 Q8 16 10 16"/></g></svg>
<svg class="abs" style="left:448.0px;top:518.0px" width="18" height="18" viewBox="0 0 18 18" ><g fill="none" stroke="#6b8798" stroke-width="1" stroke-linejoin="round" stroke-linecap="round"><path d="M8 2 Q10 2 10 4 V7 Q10 9 12 9 Q10 9 10 11 V14 Q10 16 8 16"/></g></svg>
<svg class="abs" style="left:256.0px;top:571.0px" width="18" height="18" viewBox="0 0 18 18" ><g fill="none" stroke="#6b8798" stroke-width="1" stroke-linejoin="round" stroke-linecap="round"><path d="M1.5 6 H9.5 V2.5 L16.5 9 L9.5 15.5 V12 H1.5 Z"/></g></svg>
<svg class="abs" style="left:280.0px;top:571.0px" width="18" height="18" viewBox="0 0 18 18" ><g fill="none" stroke="#6b8798" stroke-width="1" stroke-linejoin="round" stroke-linecap="round"><path d="M16.5 6 H8.5 V2.5 L1.5 9 L8.5 15.5 V12 H16.5 Z"/></g></svg>
<svg class="abs" style="left:304.0px;top:571.0px" width="18" height="18" viewBox="0 0 18 18" ><g fill="none" stroke="#6b8798" stroke-width="1" stroke-linejoin="round" stroke-linecap="round"><path d="M6 16.5 V8.5 H2.5 L9 1.5 L15.5 8.5 H12 V16.5 Z"/></g></svg>
<svg class="abs" style="left:328.0px;top:571.0px" width="18" height="18" viewBox="0 0 18 18" ><g fill="none" stroke="#6b8798" stroke-width="1" stroke-linejoin="round" stroke-linecap="round"><path d="M6 1.5 V9.5 H2.5 L9 16.5 L15.5 9.5 H12 V1.5 Z"/></g></svg>
<svg class="abs" style="left:352.0px;top:571.0px" width="18" height="18" viewBox="0 0 18 18" ><g fill="none" stroke="#6b8798" stroke-width="1" stroke-linejoin="round" stroke-linecap="round"><path d="M1.5 9 L6.5 4 V6.8 H11.5 V4 L16.5 9 L11.5 14 V11.2 H6.5 V14 Z"/></g></svg>
<svg class="abs" style="left:376.0px;top:571.0px" width="18" height="18" viewBox="0 0 18 18" ><g fill="none" stroke="#6b8798" stroke-width="1" stroke-linejoin="round" stroke-linecap="round"><path d="M9 1.5 L14 6.5 H11.2 V11.5 H14 L9 16.5 L4 11.5 H6.8 V6.5 H4 Z"/></g></svg>
<svg class="abs" style="left:400.0px;top:571.0px" width="18" height="18" viewBox="0 0 18 18" ><g fill="none" stroke="#6b8798" stroke-width="1" stroke-linejoin="round" stroke-linecap="round"><path d="M9 1 L12 4 H10.2 V7.8 H14 V6 L17 9 L14 12 V10.2 H10.2 V14 H12 L9 17 L6 14 H7.8 V10.2 H4 V12 L1 9 L4 6 V7.8 H7.8 V4 H6 Z"/></g></svg>
<svg class="abs" style="left:424.0px;top:571.0px" width="18" height="18" viewBox="0 0 18 18" ><g fill="none" stroke="#6b8798" stroke-width="1" stroke-linejoin="round" stroke-linecap="round"><path d="M9 2 L12 5 H10.2 V10.8 H14 V9 L17 12 L14 15 V13.2 H4 V15 L1 12 L4 9 V10.8 H7.8 V5 H6 Z"/></g></svg>
<svg class="abs" style="left:448.0px;top:571.0px" width="18" height="18" viewBox="0 0 18 18" ><g fill="none" stroke="#6b8798" stroke-width="1" stroke-linejoin="round" stroke-linecap="round"><path d="M3 16 V9 Q3 5 7 5 H11 V2 L16.5 6.5 L11 11 V8 H7.5 Q6 8 6 9.5 V16 Z"/></g></svg>
<svg class="abs" style="left:472.0px;top:571.0px" width="18" height="18" viewBox="0 0 18 18" ><g fill="none" stroke="#6b8798" stroke-width="1" stroke-linejoin="round" stroke-linecap="round"><path d="M2 16 V7 Q2 2 7 2 Q12 2 12 7 V10 H14.5 L10.5 15 L6.5 10 H9 V7 Q9 5 7 5 Q5 5 5 7 V16 Z"/></g></svg>
<svg class="abs" style="left:496.0px;top:571.0px" width="18" height="18" viewBox="0 0 18 18" ><g fill="none" stroke="#6b8798" stroke-width="1" stroke-linejoin="round" stroke-linecap="round"><path d="M1.5 11.5 L6 7 V9.5 H10.5 V6 H8 L12 1.5 L16 6 H13.5 V13.5 H6 V16 Z"/></g></svg>
<svg class="abs" style="left:520.0px;top:571.0px" width="18" height="18" viewBox="0 0 18 18" ><g fill="none" stroke="#6b8798" stroke-width="1" stroke-linejoin="round" stroke-linecap="round"><path d="M2 16 V13 H10.5 V6 H8 L12 1.5 L16 6 H13.5 V16 Z"/></g></svg>
<svg class="abs" style="left:544.0px;top:571.0px" width="18" height="18" viewBox="0 0 18 18" ><g fill="none" stroke="#6b8798" stroke-width="1" stroke-linejoin="round" stroke-linecap="round"><path d="M12 2 A7 7 0 0 0 5 9 A6 6 0 0 0 9 14.6 V16.5 L14 13 L9 9.5 V11.5 A3.5 3.5 0 0 1 8 9 A7 7 0 0 1 12 4.5 Z"/></g></svg>
<svg class="abs" style="left:568.0px;top:571.0px" width="18" height="18" viewBox="0 0 18 18" ><g fill="none" stroke="#6b8798" stroke-width="1" stroke-linejoin="round" stroke-linecap="round"><path d="M6 2 A7 7 0 0 1 13 9 A6 6 0 0 1 9 14.6 V16.5 L4 13 L9 9.5 V11.5 A3.5 3.5 0 0 0 10 9 A7 7 0 0 0 6 4.5 Z"/></g></svg>
<svg class="abs" style="left:592.0px;top:571.0px" width="18" height="18" viewBox="0 0 18 18" ><g fill="none" stroke="#6b8798" stroke-width="1" stroke-linejoin="round" stroke-linecap="round"><path d="M1.5 7 A7 7 0 0 0 9 15 A6.5 6.5 0 0 0 14.8 8 H16.8 L13 2.5 L9.5 8 H11.8 A3.5 3.5 0 0 1 8.5 11.5 A6 6 0 0 1 4.5 7 Z"/></g></svg>
<svg class="abs" style="left:616.0px;top:571.0px" width="18" height="18" viewBox="0 0 18 18" ><g fill="none" stroke="#6b8798" stroke-width="1" stroke-linejoin="round" stroke-linecap="round"><path d="M16.5 11 A7 7 0 0 0 9 3 A6.5 6.5 0 0 0 2 9 H5 A3.5 3.5 0 0 1 8.5 6.5 A5 5 0 0 1 12 10 H10 L13.5 15.5 L17 10 Z"/></g></svg>
<svg class="abs" style="left:640.0px;top:571.0px" width="18" height="18" viewBox="0 0 18 18" ><g fill="none" stroke="#6b8798" stroke-width="1" stroke-linejoin="round" stroke-linecap="round"><path d="M1.5 5.5 H2.5 V12.5 H1.5 Z M4 5.5 H5.5 V12.5 H4 Z M7 5.5 H10.5 V2.5 L17 9 L10.5 15.5 V12.5 H7 Z"/></g></svg>
<svg class="abs" style="left:256.0px;top:596.0px" width="18" height="18" viewBox="0 0 18 18" ><g fill="none" stroke="#6b8798" stroke-width="1" stroke-linejoin="round" stroke-linecap="round"><path d="M1.5 5.5 H10 V2.5 L16.5 9 L10 15.5 V12.5 H1.5 L4 9 Z"/></g></svg>
<svg class="abs" style="left:280.0px;top:596.0px" width="18" height="18" viewBox="0 0 18 18" ><g fill="none" stroke="#6b8798" stroke-width="1" stroke-linejoin="round" stroke-linecap="round"><path d="M2 3.5 H12 L16.5 9 L12 14.5 H2 Z"/></g></svg>
<svg class="abs" style="left:304.0px;top:596.0px" width="18" height="18" viewBox="0 0 18 18" ><g fill="none" stroke="#6b8798" stroke-width="1" stroke-linejoin="round" stroke-linecap="round"><path d="M2 3.5 H12 L16.5 9 L12 14.5 H2 L6 9 Z"/></g></svg>
<svg class="abs" style="left:328.0px;top:596.0px" width="18" height="18" viewBox="0 0 18 18" ><g fill="none" stroke="#6b8798" stroke-width="1" stroke-linejoin="round" stroke-linecap="round"><path d="M2 2.5 H9 V6.5 H11.5 V4 L16.5 9 L11.5 14 V11.5 H9 V15.5 H2 Z"/></g></svg>
<svg class="abs" style="left:352.0px;top:596.0px" width="18" height="18" viewBox="0 0 18 18" ><g fill="none" stroke="#6b8798" stroke-width="1" stroke-linejoin="round" stroke-linecap="round"><path d="M16 2.5 H9 V6.5 H6.5 V4 L1.5 9 L6.5 14 V11.5 H9 V15.5 H16 Z"/></g></svg>
<svg class="abs" style="left:376.0px;top:596.0px" width="18" height="18" viewBox="0 0 18 18" ><g fill="none" stroke="#6b8798" stroke-width="1" stroke-linejoin="round" stroke-linecap="round"><path d="M2.5 16 V9 H6.5 V6.5 H4 L9 1.5 L14 6.5 H11.5 V9 H15.5 V16 Z"/></g></svg>
<svg class="abs" style="left:400.0px;top:596.0px" width="18" height="18" viewBox="0 0 18 18" ><g fill="none" stroke="#6b8798" stroke-width="1" stroke-linejoin="round" stroke-linecap="round"><path d="M2 2.5 H16 V9 H11.5 V11.5 H14 L9 16.5 L4 11.5 H6.5 V9 H2 Z"/></g></svg>
<svg class="abs" style="left:424.0px;top:596.0px" width="18" height="18" viewBox="0 0 18 18" ><g fill="none" stroke="#6b8798" stroke-width="1" stroke-linejoin="round" stroke-linecap="round"><path d="M6.5 2 H11.5 V6.5 H13 V4.5 L17 9 L13 13.5 V11.5 H11.5 V16 H6.5 V11.5 H5 V13.5 L1 9 L5 4.5 V6.5 H6.5 Z"/></g></svg>
<svg class="abs" style="left:448.0px;top:596.0px" width="18" height="18" viewBox="0 0 18 18" ><g fill="none" stroke="#6b8798" stroke-width="1" stroke-linejoin="round" stroke-linecap="round"><path d="M9 1 L12 4 H10.5 V7.5 H14 V6 L17 9 L14 12 V10.5 H10.5 V14 H12 L9 17 L6 14 H7.5 V10.5 H4 V12 L1 9 L4 6 V7.5 H7.5 V4 H6 Z"/></g></svg>
<svg class="abs" style="left:472.0px;top:596.0px" width="18" height="18" viewBox="0 0 18 18" ><g fill="none" stroke="#6b8798" stroke-width="1" stroke-linejoin="round" stroke-linecap="round"><path d="M2 11 A6.5 6.5 0 0 1 8.5 3 A6.5 6.5 0 0 1 14.5 10 H17 L13 16 L9 10 H11.5 A3.5 3.5 0 0 0 8.5 6.5 A3.5 3.5 0 0 0 5 11 Z"/></g></svg>
<svg class="abs" style="left:256.0px;top:648.0px" width="18" height="18" viewBox="0 0 18 18" ><g fill="none" stroke="#6b8798" stroke-width="1" stroke-linejoin="round" stroke-linecap="round"><path d="M7.5 1.5 H10.5 V7.5 H16.5 V10.5 H10.5 V16.5 H7.5 V10.5 H1.5 V7.5 H7.5 Z"/></g></svg>
<svg class="abs" style="left:280.0px;top:648.0px" width="18" height="18" viewBox="0 0 18 18" ><g fill="none" stroke="#6b8798" stroke-width="1" stroke-linejoin="round" stroke-linecap="round"><path d="M1.5 7.7 H16.5 V10.3 H1.5 Z"/></g></svg>
<svg class="abs" style="left:304.0px;top:648.0px" width="18" height="18" viewBox="0 0 18 18" ><g fill="none" stroke="#6b8798" stroke-width="1" stroke-linejoin="round" stroke-linecap="round"><path d="M4.5 2 L9 6.5 L13.5 2 L16 4.5 L11.5 9 L16 13.5 L13.5 16 L9 11.5 L4.5 16 L2 13.5 L6.5 9 L2 4.5 Z"/></g></svg>
<svg class="abs" style="left:328.0px;top:648.0px" width="18" height="18" viewBox="0 0 18 18" ><g fill="none" stroke="#6b8798" stroke-width="1" stroke-linejoin="round" stroke-linecap="round"><path d="M1.5 7.8 H16.5 V10.2 H1.5 Z"/><circle cx="9" cy="4" r="1.5"/><circle cx="9" cy="14" r="1.5"/></g></svg>
<svg class="abs" style="left:352.0px;top:648.0px" width="18" height="18" viewBox="0 0 18 18" ><g fill="none" stroke="#6b8798" stroke-width="1" stroke-linejoin="round" stroke-linecap="round"><path d="M1.5 4.5 H16.5 V7.5 H1.5 Z M1.5 10.5 H16.5 V13.5 H1.5 Z"/></g></svg>
<svg class="abs" style="left:376.0px;top:648.0px" width="18" height="18" viewBox="0 0 18 18" ><g fill="none" stroke="#6b8798" stroke-width="1" stroke-linejoin="round" stroke-linecap="round"><path d="M1.5 4.5 H16.5 V7.5 H1.5 Z M1.5 10.5 H16.5 V13.5 H1.5 Z M13 2 L15 3 L5 16 L3 15 Z"/></g></svg>
<svg class="abs" style="left:256.0px;top:701.0px" width="18" height="18" viewBox="0 0 18 18" ><g fill="none" stroke="#6b8798" stroke-width="1" stroke-linejoin="round" stroke-linecap="round"><path d="M1.5 3.5 H16.5 V14.5 H1.5 Z"/></g></svg>
<svg class="abs" style="left:280.0px;top:701.0px" width="18" height="18" viewBox="0 0 18 18" ><g fill="none" stroke="#6b8798" stroke-width="1" stroke-linejoin="round" stroke-linecap="round"><rect x="1.5" y="3.5" width="15" height="11" rx="3"/></g></svg>
<svg class="abs" style="left:304.0px;top:701.0px" width="18" height="18" viewBox="0 0 18 18" ><g fill="none" stroke="#6b8798" stroke-width="1" stroke-linejoin="round" stroke-linecap="round"><path d="M1 9 L9 4.5 L17 9 L9 13.5 Z"/></g></svg>
<svg class="abs" style="left:328.0px;top:701.0px" width="18" height="18" viewBox="0 0 18 18" ><g fill="none" stroke="#6b8798" stroke-width="1" stroke-linejoin="round" stroke-linecap="round"><path d="M4.5 4 H17 L13.5 14 H1 Z"/></g></svg>
<svg class="abs" style="left:352.0px;top:701.0px" width="18" height="18" viewBox="0 0 18 18" ><g fill="none" stroke="#6b8798" stroke-width="1" stroke-linejoin="round" stroke-linecap="round"><path d="M1.5 3.5 H16.5 V14.5 H1.5 Z M4.5 3.5 V14.5 M13.5 3.5 V14.5"/></g></svg>
<svg class="abs" style="left:376.0px;top:701.0px" width="18" height="18" viewBox="0 0 18 18" ><g fill="none" stroke="#6b8798" stroke-width="1" stroke-linejoin="round" stroke-linecap="round"><path d="M2 2.5 H16 V15.5 H2 Z M5 2.5 V15.5 M2 5.5 H16"/></g></svg>
<svg class="abs" style="left:400.0px;top:701.0px" width="18" height="18" viewBox="0 0 18 18" ><g fill="none" stroke="#6b8798" stroke-width="1" stroke-linejoin="round" stroke-linecap="round"><path d="M1.5 3.5 H16.5 V12 H10 L8 14.5 H1.5 Z"/></g></svg>
<svg class="abs" style="left:424.0px;top:701.0px" width="18" height="18" viewBox="0 0 18 18" ><g fill="none" stroke="#6b8798" stroke-width="1" stroke-linejoin="round" stroke-linecap="round"><path d="M2 7 H12 V13.5 H6 L4.5 15 H2 Z M4.5 7 V5 H14.5 V11.5 H12 M7 5 V3 H16.5 V9.5 H14.5"/></g></svg>
<svg class="abs" style="left:448.0px;top:701.0px" width="18" height="18" viewBox="0 0 18 18" ><g fill="none" stroke="#6b8798" stroke-width="1" stroke-linejoin="round" stroke-linecap="round"><rect x="1.5" y="5.5" width="15" height="7" rx="3.5"/></g></svg>
<svg class="abs" style="left:472.0px;top:701.0px" width="18" height="18" viewBox="0 0 18 18" ><g fill="none" stroke="#6b8798" stroke-width="1" stroke-linejoin="round" stroke-linecap="round"><path d="M5 4 H13 L16.5 9 L13 14 H5 L1.5 9 Z"/></g></svg>
<svg class="abs" style="left:496.0px;top:701.0px" width="18" height="18" viewBox="0 0 18 18" ><g fill="none" stroke="#6b8798" stroke-width="1" stroke-linejoin="round" stroke-linecap="round"><path d="M1.5 7.5 L16.5 4 V14 H1.5 Z"/></g></svg>
<svg class="abs" style="left:520.0px;top:701.0px" width="18" height="18" viewBox="0 0 18 18" ><g fill="none" stroke="#6b8798" stroke-width="1" stroke-linejoin="round" stroke-linecap="round"><path d="M1.5 4 H16.5 L14 14.5 H4 Z"/></g></svg>
<svg class="abs" style="left:544.0px;top:701.0px" width="18" height="18" viewBox="0 0 18 18" ><g fill="none" stroke="#6b8798" stroke-width="1" stroke-linejoin="round" stroke-linecap="round"><circle cx="9" cy="9" r="4.5"/></g></svg>
<svg class="abs" style="left:568.0px;top:701.0px" width="18" height="18" viewBox="0 0 18 18" ><g fill="none" stroke="#6b8798" stroke-width="1" stroke-linejoin="round" stroke-linecap="round"><path d="M3 2.5 H15 V12 L9 16 L3 12 Z"/></g></svg>
<svg class="abs" style="left:592.0px;top:701.0px" width="18" height="18" viewBox="0 0 18 18" ><g fill="none" stroke="#6b8798" stroke-width="1" stroke-linejoin="round" stroke-linecap="round"><path d="M1.5 9 Q3.5 3.5 8 3.5 H16.5 V11"/></g></svg>
<svg class="abs" style="left:256.0px;top:725.0px" width="18" height="18" viewBox="0 0 18 18" ><g fill="none" stroke="#6b8798" stroke-width="1" stroke-linejoin="round" stroke-linecap="round"><circle cx="9" cy="9" r="7.3"/><path d="M9 1.7 V16.3 M1.7 9 H16.3"/></g></svg>
<svg class="abs" style="left:280.0px;top:725.0px" width="18" height="18" viewBox="0 0 18 18" ><g fill="none" stroke="#6b8798" stroke-width="1" stroke-linejoin="round" stroke-linecap="round"><path d="M4 2 H14 L4 16 H14 Z"/></g></svg>
<svg class="abs" style="left:304.0px;top:725.0px" width="18" height="18" viewBox="0 0 18 18" ><g fill="none" stroke="#6b8798" stroke-width="1" stroke-linejoin="round" stroke-linecap="round"><path d="M9 1.5 L14.5 9 L9 16.5 L3.5 9 Z M3.5 9 H14.5"/></g></svg>
<svg class="abs" style="left:328.0px;top:725.0px" width="18" height="18" viewBox="0 0 18 18" ><g fill="none" stroke="#6b8798" stroke-width="1" stroke-linejoin="round" stroke-linecap="round"><path d="M9 2 L16 16 H2 Z"/></g></svg>
<svg class="abs" style="left:352.0px;top:725.0px" width="18" height="18" viewBox="0 0 18 18" ><g fill="none" stroke="#6b8798" stroke-width="1" stroke-linejoin="round" stroke-linecap="round"><path d="M2 2.5 H16 L9 16.5 Z"/></g></svg>
<svg class="abs" style="left:376.0px;top:725.0px" width="18" height="18" viewBox="0 0 18 18" ><g fill="none" stroke="#6b8798" stroke-width="1" stroke-linejoin="round" stroke-linecap="round"><path d="M4 3.5 H16.5 Q13 9 16.5 14.5 H4 Q1.5 14.5 1.5 9 Q1.5 3.5 4 3.5 Z"/></g></svg>
<svg class="abs" style="left:400.0px;top:725.0px" width="18" height="18" viewBox="0 0 18 18" ><g fill="none" stroke="#6b8798" stroke-width="1" stroke-linejoin="round" stroke-linecap="round"><path d="M2 2 H9 A7 7 0 0 1 9 16 H2 Z"/></g></svg>
<svg class="abs" style="left:424.0px;top:725.0px" width="18" height="18" viewBox="0 0 18 18" ><g fill="none" stroke="#6b8798" stroke-width="1" stroke-linejoin="round" stroke-linecap="round"><path d="M16.5 15.5 H9 A7 7 0 1 1 14.5 13"/></g></svg>
<svg class="abs" style="left:448.0px;top:725.0px" width="18" height="18" viewBox="0 0 18 18" ><g fill="none" stroke="#6b8798" stroke-width="1" stroke-linejoin="round" stroke-linecap="round"><path d="M3 4.5 V14 A6 2.3 0 0 0 15 14 V4.5"/><ellipse cx="9" cy="4.5" rx="6" ry="2.3"/></g></svg>
<svg class="abs" style="left:472.0px;top:725.0px" width="18" height="18" viewBox="0 0 18 18" ><g fill="none" stroke="#6b8798" stroke-width="1" stroke-linejoin="round" stroke-linecap="round"><path d="M4.5 3 H13.5 A3 6 0 0 1 13.5 15 H4.5 A3 6 0 0 1 4.5 3 Z M13.5 3 A3 6 0 0 0 13.5 15"/></g></svg>
<svg class="abs" style="left:496.0px;top:725.0px" width="18" height="18" viewBox="0 0 18 18" ><g fill="none" stroke="#6b8798" stroke-width="1" stroke-linejoin="round" stroke-linecap="round"><path d="M6 3.5 H13 A4 5.5 0 0 1 13 14.5 H6 L1.5 9 Z"/></g></svg>
</div>
</body></html>
